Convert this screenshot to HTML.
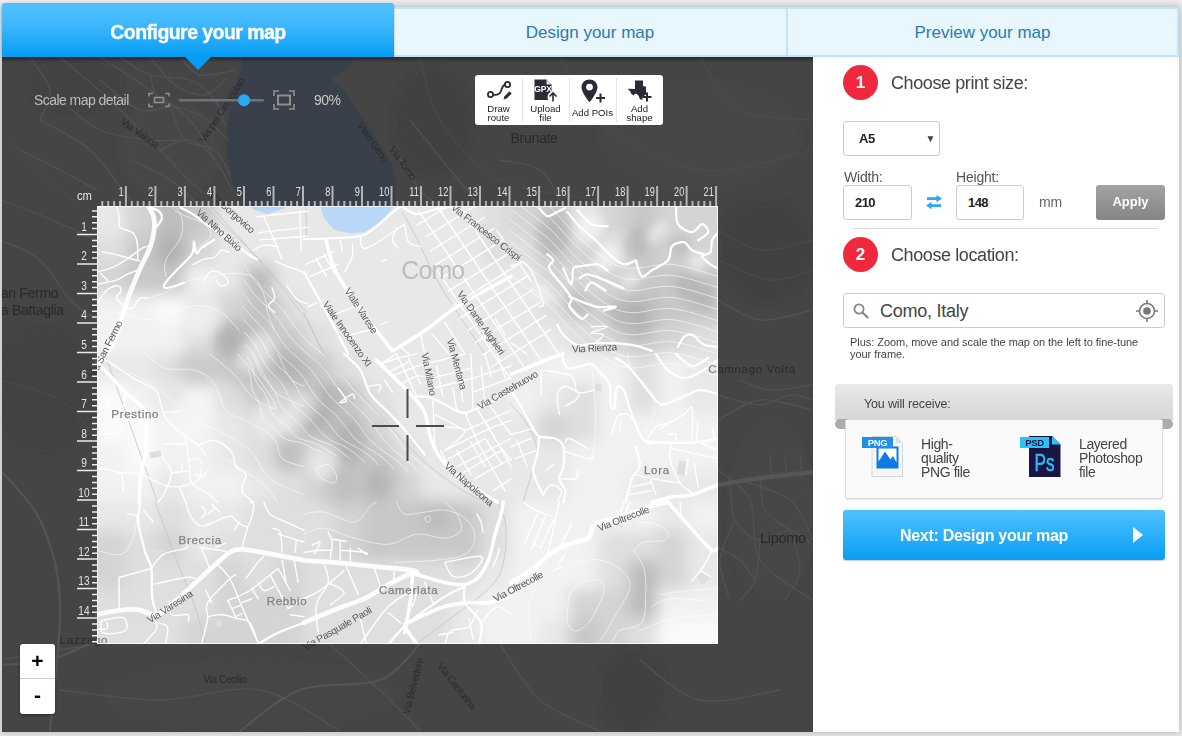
<!DOCTYPE html>
<html lang="en">
<head>
<meta charset="utf-8">
<title>Configure your map</title>
<style>
*{box-sizing:border-box;margin:0;padding:0}
html,body{width:1182px;height:736px;overflow:hidden}
body{background:#f1f1f1;font-family:"Liberation Sans",sans-serif;color:#444;position:relative}
.abs{position:absolute}
#app{position:absolute;left:2px;top:7px;width:1177px;height:724.500px;background:#fff;box-shadow:0 0 8px 2px rgba(0,0,0,.22)}
/* tabs */
#tab1{position:absolute;left:2px;top:3px;width:392px;height:54px;border-radius:3px 3px 0 0;background:linear-gradient(#50c1ff,#3eb7fc 40%,#069cf3);color:#fff;font-weight:bold;font-size:19.500px;text-align:center;line-height:58px;letter-spacing:-.55px;-webkit-text-stroke:.35px #fff;z-index:5;box-shadow:0 1px 2px rgba(0,0,0,.35)}
#tab1:after{content:"";position:absolute;left:183px;top:54px;border:13.5px solid transparent;border-top:13px solid #069cf3;border-bottom:0}
.tab{position:absolute;top:7px;height:50px;background:#e8f6fe;border:2px solid #bfe5fc;color:#2b7bb0;font-size:17px;text-align:center;line-height:47.500px;z-index:4}
#tab2{left:394px;width:394px;border-left:0}
#tab3{left:786px;width:393px}
/* map */
#map{position:absolute;left:2px;top:57px;width:811px;height:674.500px;background:#454545;overflow:hidden}
#mapsvg{position:absolute;left:-2px;top:-57px}
/* panel */
#panel{position:absolute;left:813px;top:57px;width:366px;height:674.500px;background:#fff}
.num{position:absolute;width:35px;height:35px;border-radius:50%;background:#f0283d;color:#fff;font-weight:bold;font-size:17px;text-align:center;line-height:35px}
.h{position:absolute;font-size:18px;color:#444;white-space:nowrap;letter-spacing:-.4px}
.inp{position:absolute;height:35px;border:1px solid #ccc;border-radius:3px;background:#fff;font-weight:bold;font-size:13px;color:#222;line-height:34.500px;padding-left:10px}
.lbl{position:absolute;font-size:14px;color:#555;letter-spacing:-.2px}
</style>
</head>
<body>
<div id="app"></div>
<div id="tab1">Configure your map</div>
<div id="tab2" class="tab">Design your map</div>
<div id="tab3" class="tab">Preview your map</div>

<div id="map">
<svg id="mapsvg" width="1182" height="736" viewBox="0 0 1182 736">
<defs><clipPath id="fc"><rect x="97" y="206" width="621" height="438"/></clipPath>
<filter id="bl" x="-20%" y="-20%" width="140%" height="140%"><feGaussianBlur stdDeviation="4"/></filter>
<filter id="blg" x="-5%" y="-5%" width="110%" height="110%"><feGaussianBlur stdDeviation="7.500"/></filter>
<path id="rdc" d="M175.2 206.0C176.4 208.4 181.4 214.9 182.3 220.2C183.2 225.5 182.9 232.1 180.5 238.0C178.1 243.9 170.7 251.0 168.1 255.7C165.4 260.5 164.8 262.8 164.5 266.4C164.2 270.0 166.0 275.3 166.3 277.1M148.5 298.4C151.8 297.2 161.3 294.2 168.1 291.3C174.9 288.3 182.3 283.0 189.4 280.6C196.5 278.2 203.6 278.2 210.7 277.1C217.8 275.9 224.9 273.5 232.0 273.5C239.1 273.5 248.0 273.5 253.3 277.1C258.7 280.6 261.6 288.9 264.0 294.8C266.4 300.7 265.8 306.7 267.5 312.6C269.3 318.5 273.5 327.4 274.7 330.4M97.0 319.7C100.6 318.5 109.4 312.6 118.3 312.6C127.2 312.6 141.4 319.7 150.3 319.7C159.2 319.7 163.9 315.0 171.6 312.6C179.3 310.2 188.2 305.5 196.5 305.5C204.8 305.5 214.2 308.4 221.4 312.6C228.5 316.7 236.2 327.4 239.1 330.4M171.6 206.0C172.8 207.2 173.4 210.1 178.7 213.1C184.0 216.1 198.3 219.9 203.6 223.8C208.9 227.6 211.9 232.1 210.7 236.2C209.5 240.3 198.9 246.6 196.5 248.6M511.0 175.8C514.4 178.5 524.4 186.5 531.1 191.9C537.8 197.3 543.5 200.6 551.2 208.0C559.0 215.4 568.0 227.5 577.4 236.2C586.8 244.9 598.5 255.0 607.6 260.3C616.6 265.7 621.0 267.7 631.7 268.4C642.5 269.0 657.6 263.0 672.0 264.4C686.4 265.7 710.4 274.4 718.0 276.4M511.0 186.9C514.4 189.6 524.4 197.6 531.1 203.0C537.8 208.3 543.5 211.7 551.2 219.1C559.0 226.5 568.0 238.5 577.4 247.2C586.8 256.0 598.5 266.0 607.6 271.4C616.6 276.8 621.0 278.8 631.7 279.4C642.5 280.1 657.6 274.1 672.0 275.4C686.4 276.8 710.4 285.5 718.0 287.5M511.0 198.0C514.4 200.6 524.4 208.7 531.1 214.0C537.8 219.4 543.5 222.8 551.2 230.1C559.0 237.5 568.0 249.6 577.4 258.3C586.8 267.0 598.5 277.1 607.6 282.5C616.6 287.8 621.0 289.8 631.7 290.5C642.5 291.2 657.6 285.1 672.0 286.5C686.4 287.8 710.4 296.5 718.0 298.6M511.0 209.0C514.4 211.7 524.4 219.7 531.1 225.1C537.8 230.5 543.5 233.8 551.2 241.2C559.0 248.6 568.0 260.7 577.4 269.4C586.8 278.1 598.5 288.2 607.6 293.5C616.6 298.9 621.0 300.9 631.7 301.6C642.5 302.2 657.6 296.2 672.0 297.5C686.4 298.9 710.4 307.6 718.0 309.6M511.0 220.1C514.4 222.8 524.4 230.8 531.1 236.2C537.8 241.5 543.5 244.9 551.2 252.3C559.0 259.7 568.0 271.7 577.4 280.4C586.8 289.2 598.5 299.2 607.6 304.6C616.6 310.0 621.0 312.0 631.7 312.6C642.5 313.3 657.6 307.3 672.0 308.6C686.4 310.0 710.4 318.7 718.0 320.7M511.0 231.2C514.4 233.8 524.4 241.9 531.1 247.2C537.8 252.6 543.5 256.0 551.2 263.3C559.0 270.7 568.0 282.8 577.4 291.5C586.8 300.2 598.5 310.3 607.6 315.7C616.6 321.0 621.0 323.0 631.7 323.7C642.5 324.4 657.6 318.3 672.0 319.7C686.4 321.0 710.4 329.7 718.0 331.8M511.0 242.2C514.4 244.9 524.4 252.9 531.1 258.3C537.8 263.7 543.5 267.0 551.2 274.4C559.0 281.8 568.0 293.9 577.4 302.6C586.8 311.3 598.5 321.4 607.6 326.7C616.6 332.1 621.0 334.1 631.7 334.8C642.5 335.4 657.6 329.4 672.0 330.7C686.4 332.1 710.4 340.8 718.0 342.8M511.0 253.3C514.4 256.0 524.4 264.0 531.1 269.4C537.8 274.7 543.5 278.1 551.2 285.5C559.0 292.9 568.0 304.9 577.4 313.6C586.8 322.4 598.5 332.4 607.6 337.8C616.6 343.2 621.0 345.2 631.7 345.8C642.5 346.5 657.6 340.5 672.0 341.8C686.4 343.2 710.4 351.9 718.0 353.9M511.0 264.4C514.4 267.0 524.4 275.1 531.1 280.4C537.8 285.8 543.5 289.2 551.2 296.5C559.0 303.9 568.0 316.0 577.4 324.7C586.8 333.4 598.5 343.5 607.6 348.9C616.6 354.2 621.0 356.2 631.7 356.9C642.5 357.6 657.6 351.5 672.0 352.9C686.4 354.2 710.4 362.9 718.0 365.0M511.0 275.4C514.4 278.1 524.4 286.1 531.1 291.5C537.8 296.9 543.5 300.2 551.2 307.6C559.0 315.0 568.0 327.1 577.4 335.8C586.8 344.5 598.5 354.6 607.6 359.9C616.6 365.3 621.0 367.3 631.7 368.0C642.5 368.6 657.6 362.6 672.0 363.9C686.4 365.3 710.4 374.0 718.0 376.0M145.3 354.0C148.6 356.3 157.4 365.4 165.4 368.1C173.5 370.8 185.5 367.7 193.6 370.1C201.6 372.4 208.3 375.5 213.7 382.2C219.1 388.9 219.7 403.6 225.8 410.3C231.8 417.0 241.9 417.7 249.9 422.4C258.0 427.1 268.7 432.5 274.1 438.5C279.4 444.5 277.1 453.9 282.1 458.6C287.1 463.3 300.4 465.3 304.0 466.7M209.7 354.0C213.7 357.4 226.4 366.7 233.8 374.1C241.2 381.5 247.2 392.6 253.9 398.3C260.6 404.0 270.7 407.7 274.1 408.3C277.4 409.0 276.7 407.3 274.1 402.3C271.4 397.3 264.0 386.2 258.0 378.1C251.9 370.1 241.2 358.0 237.8 354.0M253.9 354.0C256.0 358.0 262.0 371.4 266.0 378.1C270.0 384.9 271.7 389.5 278.1 394.2C284.4 398.9 299.7 404.3 304.0 406.3M103.0 358.0C112.1 363.1 142.9 378.5 157.4 388.2C171.8 397.9 179.5 409.3 189.6 416.4C199.6 423.4 207.7 424.8 217.7 430.5C227.8 436.2 241.2 442.5 249.9 450.6C258.6 458.6 261.0 471.4 270.0 478.7C279.1 486.1 298.4 492.2 304.0 494.8M278.1 354.0C280.1 358.0 285.8 372.8 290.2 378.1C294.5 383.5 301.7 384.9 304.0 386.2M217.7 454.6C221.1 456.6 230.5 462.0 237.8 466.7C245.2 471.4 255.3 476.9 262.0 482.8C268.7 488.7 275.4 498.9 278.1 502.1M316.1 468.7C318.1 468.0 324.8 463.7 328.1 464.7C331.5 465.7 335.2 471.7 336.2 474.7C337.2 477.7 336.5 482.1 334.2 482.8C331.8 483.4 325.1 481.1 322.1 478.7C319.1 476.4 317.1 470.4 316.1 468.7M627.7 354.0C628.4 356.7 627.7 363.7 631.7 370.1C635.7 376.5 648.2 384.9 651.8 392.2C655.5 399.6 655.2 407.3 653.9 414.4C652.5 421.4 645.5 431.1 643.8 434.5M591.5 364.1C592.2 372.4 595.5 398.6 595.5 414.4C595.5 430.1 594.5 447.9 591.5 458.6C588.5 469.4 579.7 475.4 577.4 478.7M97.0 550.3C101.0 551.0 115.1 556.3 121.1 554.3C127.2 552.3 130.5 544.9 133.2 538.2C135.9 531.5 136.6 518.1 137.2 514.1M304.0 514.1C307.4 513.7 315.7 510.7 324.1 512.1C332.5 513.4 346.6 523.1 354.3 522.1C362.0 521.1 366.7 509.4 370.4 506.0C374.1 502.7 375.4 502.7 376.4 502.0M304.0 534.2C307.4 533.2 315.7 527.5 324.1 528.2C332.5 528.8 343.6 535.5 354.3 538.2C365.0 540.9 378.1 544.9 388.5 544.3C398.9 543.6 407.3 535.2 416.7 534.2C426.1 533.2 437.5 538.9 444.8 538.2C452.2 537.5 458.9 534.2 460.9 530.2C463.0 526.1 459.6 518.8 456.9 514.1C454.2 509.4 446.9 504.0 444.8 502.0M396.6 502.0C397.9 504.0 399.9 512.4 404.6 514.1C409.3 515.7 418.0 512.7 424.7 512.1C431.4 511.4 438.1 509.0 444.8 510.0C451.6 511.1 459.9 513.7 465.0 518.1C470.0 522.5 475.0 530.2 475.0 536.2C475.0 542.2 471.7 550.3 465.0 554.3C458.3 558.3 446.5 559.0 434.8 560.4C423.0 561.7 401.3 562.0 394.5 562.4M424.7 518.1C425.4 517.8 427.7 515.7 428.7 516.1C429.8 516.4 431.1 519.1 430.8 520.1C430.4 521.1 427.7 522.5 426.7 522.1C425.7 521.8 425.1 518.8 424.7 518.1M559.3 574.4C562.3 572.4 570.4 564.7 577.4 562.4C584.4 560.0 593.8 558.7 601.5 560.4C609.3 562.0 619.0 567.7 623.7 572.4C628.4 577.1 631.1 581.5 629.7 588.5C628.4 595.6 620.3 606.3 615.6 614.7C610.9 623.1 604.9 633.9 601.5 638.8C598.2 643.7 596.5 643.2 595.5 644.1M569.4 594.6C571.4 592.5 576.4 584.8 581.4 582.5C586.5 580.1 595.8 578.8 599.5 580.5C603.2 582.1 604.9 586.2 603.6 592.5C602.2 598.9 595.8 612.3 591.5 618.7C587.1 625.1 581.4 630.1 577.4 630.8C573.4 631.4 568.7 628.8 567.3 622.7C566.0 616.7 569.0 599.3 569.4 594.6M633.7 550.3C635.4 548.9 638.8 543.9 643.8 542.2C648.8 540.6 659.9 541.9 663.9 540.2C667.9 538.6 669.3 534.9 667.9 532.2C666.6 529.5 661.2 525.8 655.9 524.1C650.5 522.5 639.1 522.5 635.7 522.1M633.7 550.3C635.4 553.3 641.8 561.4 643.8 568.4C645.8 575.4 646.1 583.5 645.8 592.5C645.5 601.6 646.1 616.4 641.8 622.7C637.4 629.1 624.7 627.2 619.7 630.8C614.6 634.3 612.9 641.8 611.6 644.1M531.1 644.1C530.8 637.1 527.4 613.5 529.1 602.6C530.8 591.7 539.2 582.5 541.2 578.5M659.9 594.6C664.6 593.9 678.4 591.5 688.1 590.5C697.8 589.5 713.0 588.9 718.0 588.5M651.8 606.6C655.2 605.3 660.9 599.3 672.0 598.6C683.0 597.9 710.4 601.9 718.0 602.6M639.8 630.8C645.1 628.8 658.9 621.4 672.0 618.7C685.0 616.0 710.4 615.3 718.0 614.7M420.0 57.0C423.3 67.5 426.7 99.5 440.0 120.0C453.3 140.5 473.3 166.7 500.0 180.0C526.7 193.3 583.3 196.7 600.0 200.0M560.0 57.0C566.7 67.5 576.7 101.2 600.0 120.0C623.3 138.8 664.5 165.0 700.0 170.0C735.5 175.0 794.2 153.3 813.0 150.0M700.0 57.0C706.7 65.8 721.2 99.5 740.0 110.0C758.8 120.5 800.8 118.3 813.0 120.0M718.0 230.0C725.0 233.3 744.2 248.3 760.0 250.0C775.8 251.7 804.2 241.7 813.0 240.0M718.0 260.0C726.7 263.3 754.2 278.3 770.0 280.0C785.8 281.7 805.8 271.7 813.0 270.0M0.0 130.0C8.3 138.3 36.7 167.3 50.0 180.0C63.3 192.7 75.0 201.7 80.0 206.0M0.0 380.0C10.0 383.3 43.8 390.0 60.0 400.0C76.2 410.0 90.8 433.3 97.0 440.0M244.5 265.6C246.4 268.5 251.6 277.5 255.9 282.8C260.2 288.0 265.5 292.4 270.3 297.3C275.0 302.1 280.0 306.8 284.4 312.0C288.7 317.2 292.1 323.3 296.4 328.6C300.7 333.9 305.1 339.0 310.1 343.7C315.0 348.4 321.1 352.1 326.1 356.8C331.1 361.4 335.7 366.4 340.1 371.6C344.4 376.8 347.8 382.9 352.2 388.1C356.6 393.4 361.5 398.1 366.3 402.9C371.2 407.6 376.7 411.8 381.3 416.8C385.8 421.9 389.5 427.7 393.6 433.1C397.7 438.6 401.2 444.6 405.8 449.7C410.3 454.7 415.8 458.9 420.9 463.5C426.0 468.0 433.6 474.8 436.2 477.1M243.8 279.6C245.6 282.2 250.7 290.3 254.8 295.1C258.9 299.8 264.0 303.6 268.3 308.2C272.6 312.8 276.6 317.6 280.4 322.6C284.3 327.6 287.2 333.4 291.3 338.2C295.3 343.0 300.0 347.2 304.7 351.5C309.4 355.7 314.8 359.2 319.3 363.7C323.7 368.2 327.3 373.4 331.1 378.4C335.0 383.3 338.2 388.9 342.3 393.6C346.5 398.3 351.5 402.2 356.1 406.6C360.6 411.0 365.4 415.1 369.5 419.8C373.6 424.6 376.6 430.3 380.5 435.3C384.4 440.2 388.2 445.2 392.8 449.5C397.4 453.9 403.1 457.2 407.9 461.3C412.8 465.3 419.6 471.9 421.9 474.0M243.4 293.4C245.1 295.6 250.2 302.7 254.0 307.0C257.9 311.3 262.5 314.8 266.3 319.2C270.0 323.6 273.1 328.6 276.5 333.3C279.8 338.0 282.7 343.2 286.5 347.5C290.3 351.8 295.1 355.3 299.4 359.2C303.6 363.1 308.3 366.6 312.0 371.0C315.8 375.4 318.5 380.7 322.0 385.3C325.4 390.0 328.7 394.8 332.6 399.0C336.6 403.1 341.6 406.4 345.7 410.4C349.9 414.4 353.8 418.6 357.5 423.1C361.1 427.5 363.8 432.9 367.6 437.2C371.4 441.5 375.8 445.4 380.3 449.0C384.9 452.7 390.4 455.4 395.0 459.1C399.5 462.7 405.5 469.0 407.6 470.9M243.3 306.8C245.0 308.8 250.1 314.8 253.6 318.7C257.1 322.6 261.0 326.1 264.2 330.3C267.3 334.5 269.5 339.6 272.5 343.9C275.5 348.3 278.4 352.7 282.0 356.6C285.5 360.4 290.2 363.3 293.9 367.0C297.7 370.7 301.2 374.5 304.4 378.7C307.5 382.9 309.6 388.1 312.7 392.3C315.8 396.6 319.3 400.5 323.1 404.2C326.8 407.8 331.5 410.7 335.2 414.4C338.9 418.1 342.0 422.4 345.3 426.4C348.7 430.5 351.3 435.1 355.1 438.8C358.9 442.4 363.7 445.2 368.1 448.2C372.6 451.2 377.7 453.7 381.9 457.0C386.0 460.3 391.3 466.1 393.1 468.0M243.7 319.8C245.3 321.6 250.2 326.6 253.3 330.2C256.3 333.8 259.3 337.5 261.9 341.5C264.4 345.6 266.1 350.5 268.7 354.5C271.3 358.5 274.4 362.0 277.6 365.5C280.9 368.9 285.0 371.5 288.2 375.0C291.3 378.6 293.7 382.7 296.3 386.8C298.9 390.8 300.7 395.5 303.6 399.3C306.4 403.0 310.2 406.1 313.6 409.3C317.1 412.5 321.2 415.2 324.5 418.6C327.7 422.0 330.1 426.2 333.2 429.7C336.3 433.3 339.3 437.0 343.1 439.9C346.9 442.8 351.9 444.7 356.1 447.2C360.4 449.7 364.8 452.1 368.5 455.1C372.3 458.0 377.0 463.3 378.7 465.0M244.5 332.5C245.9 334.0 250.5 338.4 252.9 341.8C255.4 345.2 257.4 349.1 259.4 352.9C261.4 356.8 262.7 361.3 265.0 364.8C267.3 368.4 270.5 371.2 273.3 374.3C276.1 377.4 279.5 380.1 282.0 383.5C284.4 387.0 285.9 391.3 288.0 395.1C290.1 398.8 291.9 402.9 294.6 406.1C297.3 409.3 301.1 411.5 304.3 414.3C307.4 417.1 310.7 419.8 313.6 422.9C316.4 426.0 318.3 429.9 321.3 432.9C324.3 435.8 327.7 438.5 331.5 440.7C335.3 442.9 340.2 444.1 344.1 446.2C348.0 448.4 351.6 450.8 355.0 453.4C358.3 456.0 362.8 460.5 364.4 461.9M245.6 344.8C246.8 346.2 250.6 350.2 252.5 353.5C254.3 356.8 255.3 360.8 256.8 364.4C258.3 368.0 259.5 371.9 261.5 375.1C263.6 378.2 266.6 380.4 268.9 383.3C271.2 386.2 273.5 389.0 275.3 392.4C277.1 395.7 277.8 400.0 279.6 403.4C281.4 406.8 283.4 409.9 285.9 412.6C288.4 415.3 292.1 417.0 294.8 419.4C297.6 421.9 300.1 424.6 302.6 427.3C305.0 430.0 306.8 433.4 309.8 435.7C312.7 438.0 316.5 439.5 320.2 441.1C323.9 442.8 328.4 443.6 331.9 445.4C335.4 447.2 338.1 449.7 341.2 452.0C344.2 454.2 348.7 457.6 350.2 458.7M246.9 357.0C247.7 358.4 250.5 362.3 251.7 365.4C252.9 368.6 253.1 372.7 254.2 376.0C255.3 379.3 256.5 382.4 258.2 385.2C259.9 387.9 262.5 389.8 264.2 392.5C265.9 395.3 267.1 398.4 268.3 401.6C269.5 404.8 269.8 408.8 271.3 411.7C272.9 414.5 275.1 416.7 277.5 418.9C279.8 421.0 283.0 422.4 285.3 424.6C287.7 426.7 289.4 429.4 291.6 431.7C293.8 434.0 295.7 436.5 298.6 438.1C301.6 439.7 305.6 440.3 309.1 441.5C312.6 442.6 316.4 443.4 319.4 444.9C322.4 446.4 324.5 448.9 327.3 450.6C330.0 452.3 334.6 454.6 336.1 455.4M248.2 369.2C248.6 370.6 250.1 374.6 250.7 377.6C251.2 380.7 250.9 384.6 251.6 387.5C252.3 390.4 253.6 392.8 254.9 395.2C256.1 397.7 258.1 399.5 259.1 402.1C260.1 404.8 260.3 408.2 261.0 411.1C261.7 414.0 262.0 417.3 263.3 419.7C264.7 422.0 267.2 423.3 269.2 425.0C271.3 426.7 273.8 428.0 275.7 429.8C277.6 431.7 278.7 434.2 280.8 436.0C282.8 437.7 285.0 439.2 287.9 440.2C290.8 441.2 294.8 441.1 297.9 441.8C301.0 442.6 304.0 443.5 306.5 444.7C309.1 446.0 310.7 448.1 313.3 449.3C315.9 450.5 320.6 451.6 322.1 452.0" fill="none" stroke-linecap="round" stroke-linejoin="round"/>
<path id="rdr" d="M203.6 206.0C212.5 214.6 239.7 238.6 256.9 257.5C274.1 276.5 298.6 309.3 307.0 319.7M210.7 206.0L307.0 312.6M402.6 212.0C404.9 216.4 410.3 225.8 416.7 238.2C423.0 250.6 429.4 267.2 440.8 286.5C452.2 305.8 477.7 342.8 485.1 354.1M306.0 206.0L306.4 238.2M105.0 354.0L157.4 502.1M324.1 354.0C331.8 362.4 355.0 387.5 370.4 404.3C385.8 421.1 402.3 440.9 416.7 454.6C431.1 468.4 445.5 478.9 456.9 486.8C468.3 494.7 480.4 499.5 485.1 502.1M511.0 404.3C513.7 407.7 522.7 416.7 527.1 424.4C531.5 432.1 536.5 442.2 537.2 450.6C537.8 459.0 533.5 466.1 531.1 474.7C528.8 483.3 524.4 497.5 523.1 502.1M155.4 502.0C159.0 512.1 171.1 545.6 177.5 562.4C183.9 579.1 188.9 589.0 193.6 602.6C198.3 616.2 203.6 637.1 205.7 644.1M416.7 644.1C421.4 640.5 434.8 630.3 444.8 622.7C454.9 615.1 468.3 606.0 477.0 598.6C485.8 591.2 492.5 586.2 497.2 578.5C501.9 570.7 503.9 561.7 505.2 552.3C506.5 542.9 506.5 530.5 505.2 522.1C503.9 513.7 498.5 505.4 497.2 502.0M307.0 320.0L324.0 354.0M304.0 313.0L322.0 350.0" fill="none" stroke-linecap="round" stroke-linejoin="round"/>
<path id="rds" d="M116.5 206.0C117.0 207.8 118.6 213.1 119.2 216.7C119.8 220.2 117.9 224.7 120.1 227.3C122.3 230.0 129.7 230.3 132.5 232.6C135.3 235.0 136.1 237.1 137.0 241.5C137.9 246.0 137.7 256.3 137.9 259.3M102.3 251.8C105.3 252.5 113.9 254.2 120.1 255.7C126.3 257.3 136.4 260.2 139.6 261.1M97.0 272.1C100.0 271.1 109.4 268.8 114.8 266.4C120.1 264.0 124.2 260.6 129.0 257.5C133.7 254.4 139.6 249.7 143.2 247.7C146.7 245.8 149.1 246.3 150.3 246.0M97.0 284.2C100.0 283.6 109.7 282.2 114.8 280.6C119.8 279.0 123.1 276.3 127.2 274.4C131.3 272.5 137.6 270.0 139.6 269.1M97.0 302.8C98.8 300.6 104.1 292.3 107.7 289.5C111.2 286.7 116.1 285.6 118.3 285.9C120.5 286.2 121.3 289.2 121.0 291.3C120.7 293.3 114.9 295.4 116.5 298.4C118.2 301.3 126.9 309.0 130.8 309.0C134.6 309.0 136.7 300.2 139.6 298.4C142.6 296.6 147.0 298.4 148.5 298.4M100.6 273.5L107.7 280.6M192.9 264.6C194.7 263.7 200.0 260.5 203.6 259.3C207.1 258.1 211.3 259.0 214.2 257.5C217.2 256.0 219.0 251.3 221.4 250.4C223.7 249.5 227.3 251.9 228.5 252.2M203.6 280.6C204.8 279.1 207.7 272.9 210.7 271.7C213.7 270.5 218.4 271.7 221.4 273.5C224.3 275.3 228.5 280.3 228.5 282.4C228.5 284.5 223.4 286.2 221.4 285.9C219.3 285.6 216.9 281.5 216.0 280.6M272.0 287.7C272.4 289.5 275.2 295.4 274.7 298.4C274.1 301.3 268.4 303.1 268.4 305.5C268.4 307.9 273.6 311.4 274.7 312.6M256.9 216.7L307.0 211.3M258.7 232.6L307.0 227.3M260.4 239.8L307.0 236.2M264.0 216.7C265.8 220.8 271.7 234.4 274.7 241.5C277.6 248.6 280.6 256.3 281.8 259.3M299.5 211.3L301.3 250.4M307.0 273.5C304.6 272.6 297.8 270.3 292.4 268.2C287.0 266.1 277.6 262.3 274.7 261.1M253.3 250.4C255.1 249.5 259.8 245.7 264.0 245.1C268.1 244.5 275.8 246.6 278.2 246.9M287.1 285.9C288.6 288.0 292.7 295.4 296.0 298.4C299.3 301.3 305.1 302.8 307.0 303.7M306.0 264.4L334.2 251.3M310.0 276.4L338.2 264.4M316.1 258.3L326.1 276.4M324.1 254.3L334.2 272.4M340.2 240.2L342.2 250.3M352.3 244.2C352.3 246.2 353.6 251.6 352.3 256.3C350.9 261.0 345.6 269.7 344.2 272.4M334.2 314.7L354.3 306.6M350.3 334.8L374.4 328.7M316.1 302.6L308.0 306.6M360.3 236.2C361.3 238.2 359.0 250.3 366.4 248.3C373.8 246.2 398.2 228.1 404.6 224.1M396.6 228.1C395.9 230.1 392.2 236.9 392.5 240.2C392.9 243.6 397.6 246.9 398.6 248.3M404.6 224.1C405.3 227.1 405.9 238.5 408.6 242.2C411.3 245.9 418.7 245.6 420.7 246.2M420.7 334.8L424.7 354.1M432.8 334.8L448.9 354.1M444.8 322.7L465.0 354.1M400.6 346.8L408.6 354.1M495.1 318.7L505.2 334.8M481.1 328.7L491.1 346.8M382.5 261.3L386.5 259.3M380.5 324.7L387.5 321.7M591.5 326.7C594.2 326.7 607.6 325.7 607.6 326.7C607.6 327.7 592.2 331.4 591.5 332.8C590.8 334.1 602.9 333.1 603.6 334.8C604.2 336.4 596.8 341.5 595.5 342.8M511.0 266.4C513.0 265.7 519.4 261.0 523.1 262.3C526.8 263.7 529.8 267.7 533.1 274.4C536.5 281.1 542.2 297.2 543.2 302.6C544.2 307.9 539.8 305.9 539.2 306.6M511.0 342.8L527.1 354.1M103.0 358.0C108.1 361.4 124.5 372.8 133.2 378.1C141.9 383.5 150.7 385.5 155.4 390.2C160.0 394.9 159.4 401.3 161.4 406.3C163.4 411.3 163.4 415.4 167.4 420.4C171.4 425.4 180.5 432.5 185.5 436.5C190.6 440.5 194.3 441.5 197.6 444.5C201.0 447.6 204.3 452.9 205.7 454.6M163.4 412.4L179.5 411.3M97.0 397.3C98.3 397.3 102.7 395.4 105.0 397.3C107.4 399.1 108.1 406.8 111.1 408.3C114.1 409.8 120.8 408.7 123.2 406.3C125.5 404.0 124.8 396.3 125.2 394.2M97.0 434.5C100.4 434.1 112.4 434.8 117.1 432.5C121.8 430.1 120.8 422.1 125.2 420.4C129.5 418.7 140.3 422.1 143.3 422.4M163.4 443.5L185.5 444.5M185.5 436.5C186.2 441.5 188.5 459.0 189.6 466.7C190.6 474.4 188.2 478.1 191.6 482.8C194.9 487.5 205.3 491.6 209.7 494.8C214.0 498.1 216.4 500.9 217.7 502.1M199.6 444.5C202.3 443.9 210.3 439.2 215.7 440.5C221.1 441.9 228.5 448.2 231.8 452.6C235.2 457.0 233.5 463.0 235.8 466.7C238.2 470.4 244.9 470.7 245.9 474.7C246.9 478.7 240.5 486.3 241.9 490.8C243.2 495.4 251.9 500.2 253.9 502.1M97.0 468.7C99.0 468.9 105.0 468.7 109.1 469.7C113.1 470.7 118.8 471.2 121.1 474.7C123.5 478.2 122.8 488.1 123.2 490.8M121.1 472.7C124.5 473.0 134.2 472.7 141.3 474.7C148.3 476.7 157.0 482.8 163.4 484.8C169.8 486.8 174.8 487.1 179.5 486.8C184.2 486.5 189.6 483.4 191.6 482.8M161.4 456.6C163.1 459.3 171.1 466.3 171.4 472.7C171.8 479.1 165.7 489.9 163.4 494.8C161.1 499.7 158.4 500.9 157.4 502.1M171.4 472.7L189.6 470.7M181.5 462.7L182.5 470.7M189.6 460.6C190.9 460.3 195.6 458.3 197.6 458.6C199.6 459.0 201.0 462.0 201.6 462.7M195.6 474.7C196.6 475.1 199.6 477.4 201.6 476.7C203.6 476.1 206.7 471.7 207.7 470.7M201.6 468.7C201.3 470.4 201.0 476.4 199.6 478.7C198.3 481.1 194.6 482.1 193.6 482.8M179.5 486.8L185.5 502.1M432.8 398.3L434.8 448.6M432.8 378.1L471.0 368.1M432.8 388.2L473.0 378.1M416.7 366.1L465.0 354.0M434.8 414.4L465.0 430.5M434.8 426.4C439.8 427.1 463.3 426.4 465.0 430.5C466.6 434.5 448.2 447.2 444.8 450.6M465.0 430.5L511.0 410.3M471.0 354.0L473.0 408.3M452.9 388.2L456.9 410.3M481.1 366.1L485.1 404.3M444.8 450.6C451.6 447.2 474.1 435.5 485.1 430.5C496.1 425.4 506.7 422.1 511.0 420.4M456.9 466.7L511.0 438.5M475.0 478.7L511.0 458.6M493.1 490.8L511.0 478.7M465.0 412.4C467.3 417.7 472.3 431.5 479.1 444.5C485.8 457.6 500.8 483.1 505.2 490.8M485.1 420.4L511.0 466.7M477.0 408.3L497.2 442.5M440.8 450.6L450.9 470.7M368.4 386.2C370.4 386.0 378.8 384.2 380.5 385.2C382.1 386.2 378.8 391.1 378.4 392.2M384.5 380.2L392.5 392.2M338.2 388.2C339.5 390.2 345.9 397.9 346.3 400.3C346.6 402.6 339.2 403.3 340.2 402.3C341.2 401.3 349.9 394.9 352.3 394.2C354.6 393.6 354.0 397.6 354.3 398.3M392.5 376.1L416.7 366.1M396.6 354.0L416.7 396.3M380.5 364.1L396.6 354.0M497.2 354.0L505.2 378.1M543.2 370.1C547.9 371.1 565.7 372.4 571.4 376.1C577.1 379.8 573.7 389.9 577.4 392.2C581.1 394.6 590.8 390.6 593.5 390.2M565.3 406.3C567.0 405.3 573.0 402.3 575.4 400.3C577.7 398.3 578.7 395.2 579.4 394.2M559.3 414.4C559.0 411.0 556.3 398.9 557.3 394.2C558.3 389.5 562.0 386.5 565.3 386.2C568.7 385.9 575.4 391.2 577.4 392.2M611.6 434.5C612.6 431.5 615.0 419.7 617.6 416.4C620.3 413.0 625.4 413.7 627.7 414.4C630.0 415.0 631.1 419.4 631.7 420.4M619.7 430.5L621.7 420.4M647.8 438.5C649.2 436.5 651.8 429.1 655.9 426.4C659.9 423.8 669.3 423.1 672.0 422.4M659.9 428.4C663.9 426.1 678.7 417.7 684.0 414.4C689.4 411.0 690.7 403.6 692.1 408.3C693.4 413.0 692.1 436.8 692.1 442.5M667.9 434.5C669.3 434.5 674.6 433.1 676.0 434.5C677.3 435.8 676.0 441.2 676.0 442.5M698.1 422.4L696.1 442.5M712.2 428.4L714.2 438.5M672.0 442.5C671.6 445.2 668.6 451.9 670.0 458.6C671.3 465.3 676.3 477.1 680.0 482.8C683.7 488.5 690.1 491.2 692.1 492.8M635.7 474.7C638.4 475.4 644.5 477.4 651.8 478.7C659.2 480.1 675.3 482.1 680.0 482.8M647.8 472.7L655.9 494.8M631.7 486.8L651.8 482.8M627.7 494.8L651.8 490.8M688.1 458.6L686.1 474.7M694.1 462.7L698.1 486.8M672.0 448.6L718.0 458.6M700.1 442.5L718.0 450.6M511.0 434.5L533.1 428.4M511.0 446.6L531.1 438.5M515.0 458.6L535.1 450.6M517.0 440.5L527.1 466.7M563.3 450.6C567.3 451.9 582.4 457.6 587.5 458.6C592.5 459.6 592.5 457.0 593.5 456.6M565.3 442.5C566.0 441.9 565.7 437.5 569.4 438.5C573.0 439.5 584.4 446.9 587.5 448.6M561.3 478.7C563.6 478.7 572.7 480.1 575.4 478.7C578.1 477.4 577.1 472.0 577.4 470.7M543.2 494.8C544.5 493.2 548.2 485.5 551.2 484.8C554.3 484.1 560.3 487.9 561.3 490.8C562.3 493.7 557.9 500.2 557.3 502.1M545.2 470.7L553.3 464.7M541.2 370.1L541.2 394.2M119.1 577.5L151.3 568.4M119.1 577.5L119.1 608.6M152.3 584.5C157.9 583.3 178.3 578.5 185.5 577.5C192.7 576.4 193.9 578.3 195.6 578.5M151.3 568.4C153.3 566.1 157.7 557.7 163.4 554.3C169.1 551.0 181.5 550.0 185.5 548.3C189.6 546.6 187.2 544.9 187.5 544.3M127.2 514.1C128.5 514.2 133.2 514.1 135.2 515.1C137.2 516.1 138.6 519.3 139.3 520.1M143.3 510.0L153.3 522.1M185.5 502.0C186.5 504.7 188.9 514.1 191.6 518.1C194.3 522.1 197.9 525.5 201.6 526.1C205.3 526.8 209.0 523.8 213.7 522.1C218.4 520.4 225.8 516.1 229.8 516.1C233.8 516.1 234.8 520.4 237.8 522.1C240.9 523.8 245.2 528.8 247.9 526.1C250.6 523.5 253.6 510.0 253.9 506.0C254.3 502.0 250.6 502.7 249.9 502.0M247.9 526.1L241.9 548.3M201.6 506.0C202.3 507.0 205.7 510.0 205.7 512.1C205.7 514.1 202.3 517.1 201.6 518.1M211.7 504.0L219.7 512.1M215.7 508.0L207.7 514.1M233.8 530.2L239.9 522.1M199.6 547.3L225.8 551.3M201.6 548.3L209.7 568.4M215.7 547.3L225.8 543.2M217.7 564.4C219.7 566.7 225.8 571.4 229.8 578.5C233.8 585.5 237.2 595.9 241.9 606.6C246.6 617.4 255.3 636.8 258.0 642.8M229.8 578.5C226.1 582.5 211.4 595.9 207.7 602.6C204.0 609.3 208.7 611.8 207.7 618.7C206.7 625.6 202.6 639.8 201.6 644.1M205.7 590.5L211.7 602.6M229.8 578.5L235.8 574.4M207.7 616.7C210.0 616.4 216.7 614.3 221.7 614.7C226.8 615.0 233.2 617.4 237.8 618.7C242.5 620.0 246.6 618.7 249.9 622.7C253.3 626.7 256.6 639.5 258.0 642.8M227.8 600.6C231.5 598.9 241.5 595.9 249.9 590.5C258.3 585.2 273.4 572.1 278.1 568.4M227.8 600.6L235.8 616.7M231.8 608.6L239.9 605.6M235.8 616.7L241.9 613.7M241.9 602.6L251.9 598.6M251.9 588.5L258.0 598.6M258.0 582.5C259.0 583.8 261.3 589.9 264.0 590.5C266.7 591.2 272.4 587.2 274.1 586.5M270.0 574.4L288.1 608.6M278.1 568.4L290.2 590.5M245.9 578.5C247.9 575.8 254.9 566.1 258.0 562.4C261.0 558.7 263.0 557.3 264.0 556.3M264.0 502.0C265.0 504.0 266.3 510.7 270.0 514.1C273.7 517.4 280.5 519.4 286.1 522.1C291.8 524.8 301.1 528.8 304.0 530.2M272.1 528.2C273.4 528.8 278.4 528.2 280.1 532.2C281.8 536.2 281.8 548.9 282.1 552.3M278.1 534.2L304.0 542.2M296.2 540.2L295.2 552.3M294.2 560.4L298.2 582.5M282.1 560.4L286.1 582.5M101.0 620.7C104.7 620.2 119.1 616.0 123.2 617.7C127.2 619.4 128.5 628.3 125.2 630.8C121.8 633.3 107.1 634.5 103.0 632.8C99.0 631.1 101.4 622.7 101.0 620.7M97.0 628.8C98.7 628.8 105.4 629.8 107.1 628.8C108.7 627.8 107.1 623.7 107.1 622.7M155.4 622.7C157.4 623.4 165.7 623.2 167.4 626.7C169.1 630.3 165.7 641.2 165.4 644.1M169.4 600.6C169.8 602.9 168.4 612.3 171.4 614.7C174.5 617.0 184.7 613.7 187.5 614.7C190.4 615.7 188.4 619.7 188.5 620.7M143.3 644.1C145.3 641.8 153.0 634.3 155.4 630.8C157.7 627.2 157.0 624.1 157.4 622.7M288.1 608.6L304.0 598.6M290.2 614.7L304.0 616.7M444.8 562.4C446.5 562.0 449.2 561.4 454.9 560.4C460.6 559.3 474.7 556.0 479.1 556.3C483.4 556.7 482.7 559.3 481.1 562.4C479.4 565.4 473.7 572.1 469.0 574.4C464.3 576.8 456.9 578.5 452.9 576.4C448.9 574.4 446.2 564.7 444.8 562.4M477.0 514.1C477.7 515.4 480.1 519.1 481.1 522.1C482.1 525.1 482.7 530.5 483.1 532.2M493.1 566.4C493.8 564.7 496.2 559.3 497.2 556.3C498.2 553.3 498.8 549.6 499.2 548.3M328.1 532.2C328.8 533.9 331.8 537.9 332.2 542.2C332.5 546.6 330.5 555.7 330.2 558.3M332.2 539.2L346.3 541.2M340.2 542.2L340.2 560.4M350.3 548.3L350.3 560.4M340.2 550.3C344.2 550.6 360.0 551.6 364.4 552.3C368.7 553.0 367.4 555.0 366.4 554.3C365.4 553.6 359.7 549.3 358.3 548.3M312.0 545.3C313.4 544.8 319.8 540.7 320.1 542.2C320.4 543.8 315.1 552.3 314.1 554.3M304.0 552.3C306.7 552.0 315.7 550.6 320.1 550.3C324.5 550.0 328.5 550.3 330.2 550.3M324.1 564.4C324.8 567.4 329.5 575.4 328.1 582.5C326.8 589.5 317.4 596.4 316.1 606.6C314.7 616.9 319.4 637.8 320.1 644.1M346.3 566.4L358.3 594.6M328.1 582.5C330.8 584.2 343.9 588.9 344.2 592.5C344.6 596.2 332.5 602.6 330.2 604.6M304.0 598.6C306.7 597.2 313.4 595.2 320.1 590.5C326.8 585.8 340.2 573.8 344.2 570.4M374.4 568.4L380.5 586.5M394.5 570.4L393.5 578.5M360.3 644.1C364.4 638.5 378.1 618.2 384.5 610.7C390.9 603.1 393.9 601.9 398.6 598.6C403.3 595.2 410.3 591.9 412.7 590.5M388.5 612.7L400.6 622.7M360.3 618.7L366.4 644.1M424.7 582.5L432.8 602.6M416.7 592.5L412.7 606.6M444.8 644.1C445.9 641.8 446.9 633.7 450.9 630.8C454.9 627.9 464.6 630.1 469.0 626.7C473.3 623.4 475.7 613.3 477.0 610.7M469.0 618.7L473.0 638.8M438.8 634.8L452.9 632.8M481.1 622.7C483.7 620.0 492.2 608.0 497.2 606.6C502.2 605.3 508.7 613.3 511.0 614.7M712.2 550.3C710.5 553.3 705.5 563.4 702.1 568.4C698.8 573.4 693.8 578.5 692.1 580.5M700.1 570.4L710.2 576.4M680.0 502.0L682.0 520.1M523.1 502.0C525.1 503.3 530.5 507.7 535.1 510.0C539.8 512.4 548.6 515.1 551.2 516.1M537.2 514.1L525.1 542.2M545.2 516.1L531.1 550.3M553.3 520.1L541.2 546.3M559.3 502.0C558.6 505.0 557.3 511.1 555.3 520.1C553.3 529.2 548.6 550.3 547.2 556.3M571.4 524.1L559.3 548.3M535.1 544.3L541.2 548.3M559.3 562.4L565.3 554.3M553.3 570.4L563.3 566.4M615.6 510.0C616.3 510.7 618.3 515.4 619.7 514.1C621.0 512.7 623.0 504.0 623.7 502.0M625.7 512.1L629.7 502.0M60.0 57.0C68.3 64.2 93.3 84.5 110.0 100.0C126.7 115.5 145.0 135.0 160.0 150.0C175.0 165.0 187.5 180.7 200.0 190.0C212.5 199.3 229.2 203.3 235.0 206.0M100.0 57.0C108.3 62.5 135.0 79.5 150.0 90.0C165.0 100.5 179.2 108.3 190.0 120.0C200.8 131.7 210.8 153.3 215.0 160.0M150.0 57.0C154.2 61.7 165.8 78.7 175.0 85.0C184.2 91.3 196.7 95.8 205.0 95.0C213.3 94.2 221.7 82.5 225.0 80.0M40.0 120.0C48.3 125.0 75.0 136.7 90.0 150.0C105.0 163.3 123.3 191.7 130.0 200.0M0.0 240.0C6.7 243.3 28.3 250.0 40.0 260.0C51.7 270.0 60.5 290.0 70.0 300.0C79.5 310.0 92.5 316.7 97.0 320.0M180.0 57.0C183.3 60.0 190.8 72.8 200.0 75.0C209.2 77.2 229.2 70.8 235.0 70.0M160.0 150.0C165.0 148.3 180.8 138.3 190.0 140.0C199.2 141.7 208.0 151.7 215.0 160.0C222.0 168.3 229.2 185.0 232.0 190.0M718.0 300.0C725.0 303.3 744.2 318.3 760.0 320.0C775.8 321.7 804.2 311.7 813.0 310.0M718.0 420.0C725.0 416.7 744.2 401.7 760.0 400.0C775.8 398.3 804.2 408.3 813.0 410.0M740.0 480.0C748.3 483.3 777.8 490.0 790.0 500.0C802.2 510.0 809.2 533.3 813.0 540.0M718.0 470.0C723.3 475.0 743.0 485.0 750.0 500.0C757.0 515.0 749.5 543.3 760.0 560.0C770.5 576.7 804.2 593.3 813.0 600.0M0.0 660.0C10.0 658.3 43.8 652.7 60.0 650.0C76.2 647.3 90.8 645.0 97.0 644.0M60.0 690.0C76.7 691.7 126.7 700.0 160.0 700.0C193.3 700.0 230.0 684.8 260.0 690.0C290.0 695.2 326.7 724.2 340.0 731.0M330.0 644.0C340.0 653.3 375.0 685.5 390.0 700.0C405.0 714.5 415.0 725.8 420.0 731.0M500.0 644.0C506.7 653.3 523.3 685.5 540.0 700.0C556.7 714.5 590.0 725.8 600.0 731.0M640.0 660.0C650.0 666.7 676.7 695.0 700.0 700.0C723.3 705.0 766.7 691.7 780.0 690.0M395.0 150.0C399.2 156.7 412.5 180.7 420.0 190.0C427.5 199.3 436.7 203.3 440.0 206.0M410.0 120.0C416.7 128.3 438.3 155.7 450.0 170.0C461.7 184.3 475.0 200.0 480.0 206.0M500.0 160.0C506.7 161.7 530.0 163.3 540.0 170.0C550.0 176.7 556.7 195.0 560.0 200.0M380.5 364.1C383.5 363.1 392.5 359.7 398.6 358.0C404.6 356.3 413.7 354.7 416.7 354.0M388.5 372.1L408.6 362.0M400.6 384.2C403.3 382.8 411.3 377.1 416.7 376.1C422.0 375.1 430.1 377.8 432.8 378.1M408.6 358.0L420.7 384.2M436.8 366.1L442.8 396.3M456.9 360.0L463.0 402.3M485.1 354.0L491.1 376.1M473.0 378.1L511.0 366.1M473.0 392.2L511.0 378.1M489.1 404.3L511.0 434.5M456.9 450.6L471.0 474.7M471.0 442.5L485.1 466.7M485.1 438.5L501.2 462.7M497.2 442.5L511.0 460.6M448.9 458.6L485.1 438.5M463.0 472.7L501.2 450.6M730.0 478.0C730.8 485.0 730.0 509.7 735.0 520.0C740.0 530.3 750.8 538.3 760.0 540.0C769.2 541.7 781.2 529.2 790.0 530.0C798.8 530.8 809.2 542.5 813.0 545.0M760.0 478.0C760.8 483.3 760.0 501.3 765.0 510.0C770.0 518.7 785.8 526.7 790.0 530.0M735.0 520.0C732.5 526.7 720.8 546.7 720.0 560.0C719.2 573.3 728.3 593.3 730.0 600.0M760.0 540.0C759.2 546.7 758.3 570.0 755.0 580.0C751.7 590.0 742.5 596.7 740.0 600.0M790.0 530.0C791.7 536.7 800.8 558.3 800.0 570.0C799.2 581.7 787.5 595.0 785.0 600.0M770.0 455.0L772.0 478.0M785.0 455.0L787.0 478.0M800.0 455.0L802.0 478.0M718.0 548.0C721.7 550.0 733.8 554.7 740.0 560.0C746.2 565.3 752.5 576.7 755.0 580.0M718.0 395.0C725.0 396.7 748.0 405.0 760.0 405.0C772.0 405.0 781.2 395.8 790.0 395.0C798.8 394.2 809.2 399.2 813.0 400.0M740.0 380.0C745.0 381.7 757.8 389.2 770.0 390.0C782.2 390.8 805.8 385.8 813.0 385.0M120.0 57.0C125.0 60.0 138.3 71.2 150.0 75.0C161.7 78.8 179.2 75.8 190.0 80.0C200.8 84.2 209.2 92.5 215.0 100.0C220.8 107.5 223.3 120.8 225.0 125.0M150.0 75.0C151.7 79.2 151.7 93.3 160.0 100.0C168.3 106.7 188.7 108.3 200.0 115.0C211.3 121.7 223.3 135.8 228.0 140.0M100.0 80.0C106.7 85.0 128.3 105.8 140.0 110.0C151.7 114.2 165.0 105.8 170.0 105.0M170.0 105.0C172.5 110.8 177.5 132.5 185.0 140.0C192.5 147.5 207.5 144.2 215.0 150.0C222.5 155.8 227.5 170.8 230.0 175.0M60.0 100.0C66.7 105.0 85.0 123.3 100.0 130.0C115.0 136.7 135.8 138.3 150.0 140.0C164.2 141.7 179.2 140.0 185.0 140.0M130.0 160.0C136.7 163.3 158.3 172.3 170.0 180.0C181.7 187.7 195.0 201.7 200.0 206.0M20.0 150.0C26.7 153.3 47.2 163.3 60.0 170.0C72.8 176.7 90.8 186.7 97.0 190.0M0.0 200.0C6.7 202.5 23.8 208.3 40.0 215.0C56.2 221.7 87.5 235.8 97.0 240.0M30.0 57.0C33.3 62.5 48.3 79.5 50.0 90.0C51.7 100.5 41.7 115.0 40.0 120.0M417.9 224.7L446.2 207.0M425.6 237.0L473.6 206.9M430.4 251.0L484.1 217.5M435.3 265.1L494.7 228.0M443.0 277.4L502.3 240.3M447.8 291.4L512.9 250.8M452.7 305.5L520.5 263.1M460.4 317.8L528.2 275.4M468.1 330.1L533.1 289.5M475.7 342.4L540.8 301.8M483.4 354.7L545.6 315.8M491.1 367.0L550.5 329.9M497.1 230.6L530.7 280.4M459.8 207.5L558.6 354.0M437.4 206.5L541.8 361.3M418.8 211.1L526.9 371.3M437.4 270.9L510.1 378.7" fill="none" stroke-linecap="round" stroke-linejoin="round"/>
<path id="rdm" d="M150.3 207.8C151.8 208.4 157.3 209.6 159.2 211.3C161.1 213.1 162.1 216.1 161.8 218.4C161.5 220.8 158.7 223.9 157.4 225.5C156.1 227.2 154.7 227.8 154.2 228.2M214.2 239.8C212.2 241.1 204.8 245.5 201.8 247.7C198.9 250.0 197.8 254.1 196.5 253.1C195.2 252.0 194.6 241.4 193.8 241.5C193.1 241.7 195.2 248.9 192.0 254.0C188.9 259.0 179.8 266.7 175.2 271.7C170.6 276.8 165.8 281.4 164.5 284.2C163.2 286.9 163.9 288.3 167.2 288.1C170.4 287.8 181.2 283.6 184.0 282.7M180.5 207.8C182.3 208.7 186.1 209.8 191.2 213.1C196.2 216.4 203.9 222.6 210.7 227.3C217.5 232.1 225.8 237.1 232.0 241.5C238.2 246.0 243.9 251.0 248.0 254.0C252.1 256.9 255.4 258.4 256.9 259.3M304.0 239.2C308.7 239.0 322.8 238.7 332.2 238.2C341.6 237.7 353.3 237.9 360.3 236.2C367.4 234.5 369.4 231.8 374.4 228.1C379.5 224.4 386.2 217.7 390.5 214.0C394.9 210.4 398.9 207.3 400.6 206.0M400.6 206.0C403.3 207.3 411.3 213.4 416.7 214.0C422.0 214.7 426.7 211.4 432.8 210.0C438.8 208.7 449.5 206.7 452.9 206.0M304.0 272.4C305.3 274.7 309.0 281.1 312.0 286.5C315.1 291.8 318.1 297.2 322.1 304.6C326.1 312.0 331.8 322.5 336.2 330.7C340.6 339.0 346.3 350.2 348.3 354.1M539.2 208.0C540.5 209.4 544.2 215.4 547.2 216.1C550.2 216.7 554.3 213.4 557.3 212.0C560.3 210.7 564.0 208.7 565.3 208.0M567.3 212.0C569.4 214.4 574.7 221.4 579.4 226.1C584.1 230.8 590.1 235.2 595.5 240.2C600.9 245.2 606.9 252.3 611.6 256.3C616.3 260.3 619.7 263.7 623.7 264.4C627.7 265.0 633.7 261.0 635.7 260.3M577.4 210.0C579.7 212.4 586.5 221.4 591.5 224.1C596.5 226.8 604.9 225.8 607.6 226.1M635.7 260.3C636.8 263.0 639.1 274.7 641.8 276.4C644.5 278.1 647.5 273.1 651.8 270.4C656.2 267.7 664.6 264.4 667.9 260.3C671.3 256.3 669.3 249.3 672.0 246.2C674.6 243.2 680.7 241.5 684.0 242.2C687.4 242.9 688.7 248.3 692.1 250.3C695.4 252.3 702.1 253.6 704.2 254.3M676.0 206.0C676.3 209.0 675.3 219.7 678.0 224.1C680.7 228.5 688.1 232.2 692.1 232.2C696.1 232.2 699.5 224.1 702.1 224.1C704.8 224.1 708.9 229.5 708.2 232.2C707.5 234.8 699.8 238.9 698.1 240.2M547.2 254.3C548.2 255.3 552.9 258.0 553.3 260.3C553.6 262.7 547.6 264.0 549.2 268.4C550.9 272.7 559.6 281.5 563.3 286.5C567.0 291.5 570.4 295.2 571.4 298.6C572.4 301.9 567.7 303.3 569.4 306.6C571.0 310.0 578.4 317.3 581.4 318.7C584.4 320.0 586.5 315.3 587.5 314.7M563.3 268.4C564.7 271.1 569.7 284.5 571.4 284.5C573.0 284.5 572.0 271.4 573.4 268.4C574.7 265.4 575.4 267.0 579.4 266.4C583.4 265.7 592.8 263.7 597.5 264.4C602.2 265.0 605.9 269.4 607.6 270.4M579.4 278.4C580.8 277.8 583.1 274.1 587.5 274.4C591.8 274.7 599.5 278.1 605.6 280.4C611.6 282.8 620.7 287.2 623.7 288.5M585.4 290.5C586.5 289.2 588.1 282.5 591.5 282.5C594.8 282.5 603.2 289.2 605.6 290.5M569.4 296.5C573.7 298.2 587.8 304.9 595.5 306.6C603.2 308.3 614.3 305.9 615.6 306.6C617.0 307.3 605.6 310.0 603.6 310.6M557.3 324.7C558.3 326.4 560.0 331.4 563.3 334.8C566.7 338.1 571.0 343.5 577.4 344.8C583.8 346.2 592.5 342.8 601.5 342.8C610.6 342.8 623.3 343.5 631.7 344.8C640.1 346.2 648.5 349.9 651.8 350.9M718.0 232.2C717.1 233.5 713.5 236.9 712.2 240.2C710.9 243.6 711.9 249.6 710.2 252.3C708.5 255.0 702.1 254.3 702.1 256.3C702.1 258.3 707.5 262.3 710.2 264.4C712.8 266.4 716.7 267.7 718.0 268.4M678.0 346.8C679.0 345.2 681.7 338.8 684.0 336.8C686.4 334.8 688.7 333.4 692.1 334.8C695.4 336.1 699.8 342.8 704.2 344.8C708.5 346.8 715.7 346.5 718.0 346.8M344.2 354.0C346.9 356.7 356.0 363.4 360.3 370.1C364.7 376.8 365.7 387.2 370.4 394.2C375.1 401.3 382.1 405.6 388.5 412.4C394.9 419.1 402.6 427.4 408.6 434.5C414.7 441.5 422.0 451.3 424.7 454.6M416.7 396.3C419.4 396.6 425.4 395.6 432.8 398.3C440.2 400.9 453.6 410.7 460.9 412.4C468.3 414.0 468.7 411.7 477.0 408.3C485.4 405.0 505.4 394.9 511.0 392.2M511.0 390.2C513.0 393.6 519.4 404.0 523.1 410.3C526.8 416.7 530.5 424.1 533.1 428.4C535.8 432.8 535.5 434.8 539.2 436.5C542.9 438.2 551.2 436.8 555.3 438.5C559.3 440.2 562.0 441.9 563.3 446.6C564.7 451.3 564.0 461.3 563.3 466.7C562.6 472.0 559.0 474.7 559.3 478.7C559.6 482.8 564.7 486.9 565.3 490.8C566.0 494.7 563.6 500.2 563.3 502.1M539.2 436.5C538.8 439.5 538.2 448.9 537.2 454.6C536.2 460.3 533.1 466.0 533.1 470.7C533.1 475.4 535.5 478.7 537.2 482.8C538.8 486.8 542.2 492.8 543.2 494.8M561.3 354.0C562.3 356.3 564.0 366.1 567.3 368.1C570.7 370.1 577.4 366.7 581.4 366.1C585.4 365.4 588.5 363.1 591.5 364.1C594.5 365.1 596.5 368.8 599.5 372.1C602.5 375.5 607.7 378.6 609.6 384.2C611.4 389.7 609.8 401.5 610.6 405.3C611.4 409.2 613.6 410.2 614.6 407.3C615.6 404.5 615.1 391.1 616.6 388.2C618.1 385.4 621.2 385.9 623.7 390.2C626.2 394.6 628.4 406.0 631.7 414.4C635.1 422.7 639.8 435.8 643.8 440.5C647.8 445.2 653.9 442.2 655.9 442.5M615.6 358.0C617.6 359.4 623.7 362.4 627.7 366.1C631.7 369.8 635.1 374.5 639.8 380.2C644.5 385.9 651.8 396.3 655.9 400.3C659.9 404.3 659.2 405.0 663.9 404.3C668.6 403.6 678.0 398.6 684.0 396.3C690.1 393.9 694.5 390.6 700.1 390.2C705.8 389.9 715.1 393.6 718.0 394.2M643.8 440.5C647.2 440.9 655.9 442.2 663.9 442.5C672.0 442.9 683.1 443.2 692.1 442.5C701.1 441.9 713.7 439.2 718.0 438.5M635.7 446.6C636.4 449.9 640.4 461.3 639.8 466.7C639.1 472.0 634.1 472.8 631.7 478.7C629.4 484.7 626.7 498.2 625.7 502.1M655.9 354.0C657.9 356.7 663.2 366.1 667.9 370.1C672.6 374.1 678.7 377.8 684.0 378.1C689.4 378.5 694.5 375.1 700.1 372.1C705.8 369.1 715.1 362.0 718.0 360.0M676.0 354.0C678.7 356.0 686.7 365.4 692.1 366.1C697.5 366.7 705.5 359.4 708.2 358.0M140.3 502.0C139.9 505.4 137.4 513.7 138.2 522.1C139.1 530.5 143.1 544.6 145.3 552.3C147.5 560.0 150.2 560.7 151.3 568.4C152.5 576.1 151.3 590.9 152.3 598.6C153.3 606.3 156.5 612.0 157.4 614.7M258.0 644.1C261.3 642.2 270.4 636.3 278.1 632.8C285.8 629.2 299.7 624.4 304.0 622.7M388.5 644.1C391.9 640.5 399.2 630.6 408.6 622.7C418.0 614.8 435.5 602.6 444.8 596.6C454.2 590.5 461.6 588.2 465.0 586.5M465.0 584.5C465.0 587.5 462.3 596.2 465.0 602.6C467.6 609.0 478.7 615.8 481.1 622.7C483.4 629.6 479.4 640.5 479.1 644.1M0.0 470.0C6.7 478.3 30.0 498.3 40.0 520.0C50.0 541.7 58.3 564.8 60.0 600.0C61.7 635.2 51.7 709.2 50.0 731.0M97.0 640.0C89.2 643.3 66.2 655.8 50.0 660.0C33.8 664.2 8.3 664.2 0.0 665.0M240.0 731.0C250.0 724.2 276.7 698.5 300.0 690.0C323.3 681.5 360.0 687.7 380.0 680.0C400.0 672.3 413.3 650.0 420.0 644.0" fill="none" stroke-linecap="round" stroke-linejoin="round"/>
<path id="rdM" d="M326.1 240.2C327.8 245.6 329.8 260.0 336.2 272.4C342.6 284.8 355.0 301.6 364.4 314.7C373.8 327.7 387.8 344.8 392.5 350.9M392.5 350.9C397.9 347.5 414.0 338.1 424.7 330.7C435.5 323.4 446.9 313.3 456.9 306.6C467.0 299.9 476.1 295.5 485.1 290.5C494.1 285.5 506.7 278.8 511.0 276.4M97.0 362.0C101.7 367.1 117.1 383.8 125.2 392.2C133.2 400.6 141.9 402.6 145.3 412.4C148.6 422.1 146.1 439.5 145.3 450.6C144.5 461.6 141.3 470.2 140.3 478.7C139.3 487.3 139.4 498.2 139.3 502.1M376.4 360.0C379.1 362.7 386.5 370.1 392.5 376.1C398.6 382.2 407.3 390.2 412.7 396.3C418.0 402.3 421.7 405.3 424.7 412.4C427.7 419.4 428.1 430.8 430.8 438.5C433.4 446.2 436.5 452.6 440.8 458.6C445.2 464.7 449.5 468.7 456.9 474.7C464.3 480.8 478.4 490.3 485.1 494.8C491.8 499.4 495.1 500.9 497.2 502.1M511.0 374.1C514.4 372.8 524.4 368.8 531.1 366.1C537.8 363.4 545.9 360.0 551.2 358.0C556.6 356.0 561.3 354.7 563.3 354.0M651.8 502.1C655.2 501.2 665.3 498.1 672.0 496.9C678.7 495.6 684.4 496.9 692.1 494.8C699.8 492.8 713.7 486.5 718.0 484.8M412.7 572.4C412.3 576.8 411.6 590.2 410.6 598.6C409.6 607.0 407.6 617.0 406.6 622.7C405.6 628.4 404.9 631.1 404.6 632.8M404.6 626.7L416.7 644.1M416.7 574.4C421.4 575.8 436.8 580.8 444.8 582.5C452.9 584.2 459.3 585.5 465.0 584.5C470.7 583.5 475.0 580.8 479.1 576.4C483.1 572.1 486.4 565.4 489.1 558.3C491.8 551.3 493.1 541.6 495.1 534.2C497.2 526.8 499.8 519.4 501.2 514.1C502.5 508.7 502.9 504.0 503.2 502.0M404.6 624.7C408.0 623.1 418.0 617.7 424.7 614.7C431.4 611.7 437.5 608.6 444.8 606.6C452.2 604.6 461.6 603.3 469.0 602.6C476.4 601.9 482.1 603.6 489.1 602.6C496.1 601.6 507.4 597.6 511.0 596.6M667.9 502.0C670.6 505.0 678.7 514.1 684.0 520.1C689.4 526.1 695.4 533.2 700.1 538.2C704.8 543.2 709.2 548.6 712.2 550.3C715.2 552.0 717.1 548.6 718.0 548.3" fill="none" stroke-linecap="round" stroke-linejoin="round"/>
<path id="rdW" d="M148.5 206.0C149.3 207.8 152.5 212.8 153.5 216.7C154.4 220.5 154.7 224.1 154.2 229.1C153.7 234.1 153.0 239.5 150.3 246.9C147.6 254.3 142.0 263.7 137.9 273.5C133.7 283.3 129.0 295.1 125.4 305.5C121.9 315.9 120.1 327.5 116.5 336.0C113.0 344.6 107.4 352.6 104.1 357.0C100.8 361.4 98.2 361.4 97.0 362.3M97.0 614.7C100.4 614.0 110.4 611.5 117.1 610.7C123.8 609.8 130.5 609.0 137.2 609.6C143.9 610.3 151.3 615.8 157.4 614.7C163.4 613.5 167.4 607.6 173.5 602.6C179.5 597.6 186.2 591.2 193.6 584.5C201.0 577.8 211.7 567.7 217.7 562.4C223.8 557.0 225.8 554.5 229.8 552.3C233.8 550.1 235.5 549.1 241.9 549.3C248.2 549.5 257.7 551.5 268.0 553.3C278.4 555.2 298.0 559.2 304.0 560.4M304.0 560.4C309.0 560.7 322.8 561.4 334.2 562.4C345.6 563.4 359.3 565.0 372.4 566.4C385.5 567.7 405.3 569.1 412.7 570.4C420.0 571.8 416.0 573.8 416.7 574.4M304.0 622.7C308.7 620.7 322.1 614.7 332.2 610.7C342.2 606.6 355.0 602.9 364.4 598.6C373.8 594.2 380.5 588.9 388.5 584.5C396.6 580.1 408.6 574.4 412.7 572.4M511.0 582.5C514.4 580.5 525.1 574.8 531.1 570.4C537.2 566.1 541.9 560.4 547.2 556.3C552.6 552.3 556.6 549.3 563.3 546.3C570.0 543.2 582.1 541.9 587.5 538.2C592.8 534.5 589.5 527.8 595.5 524.1C601.5 520.4 614.3 519.1 623.7 516.1C633.1 513.1 644.5 508.4 651.8 506.0C659.2 503.7 665.3 502.7 667.9 502.0M718.0 485.0C725.0 483.8 744.2 480.2 760.0 478.0C775.8 475.8 804.2 473.0 813.0 472.0" fill="none" stroke-linecap="round" stroke-linejoin="round"/>
<g id="shd"><ellipse cx="432.5" cy="122.5" rx="37.5" ry="52.5" opacity="0.3"/><ellipse cx="766.5" cy="250.0" rx="46.5" ry="50.0" opacity="0.3"/><ellipse cx="632.5" cy="690.5" rx="32.5" ry="40.5" opacity="0.3"/><ellipse cx="45.0" cy="390.0" rx="45.0" ry="60.0" opacity="0.2"/><ellipse cx="75.0" cy="85.0" rx="45.0" ry="25.0" opacity="0.2"/><ellipse cx="233.6" cy="338.9" rx="17.7" ry="23.0" opacity="0.12" transform="rotate(45 233.6 338.9)"/><ellipse cx="267.1" cy="315.9" rx="15.9" ry="24.7" opacity="0.08000000000000002" transform="rotate(45 267.1 315.9)"/><ellipse cx="290.1" cy="367.1" rx="21.2" ry="19.4" opacity="0.08800000000000001" transform="rotate(45 290.1 367.1)"/><ellipse cx="321.9" cy="407.8" rx="14.1" ry="31.8" opacity="0.12" transform="rotate(45 321.9 407.8)"/><ellipse cx="351.9" cy="441.3" rx="15.9" ry="19.4" opacity="0.12" transform="rotate(45 351.9 441.3)"/><ellipse cx="385.5" cy="476.6" rx="17.7" ry="19.4" opacity="0.08000000000000002" transform="rotate(45 385.5 476.6)"/><ellipse cx="194.7" cy="368.9" rx="21.2" ry="17.7" opacity="0.08000000000000002" transform="rotate(45 194.7 368.9)"/><ellipse cx="253.0" cy="386.6" rx="19.4" ry="14.1" opacity="0.08000000000000002" transform="rotate(45 253.0 386.6)"/><ellipse cx="290.1" cy="451.9" rx="14.1" ry="15.9" opacity="0.08000000000000002" transform="rotate(45 290.1 451.9)"/><ellipse cx="339.6" cy="490.8" rx="17.7" ry="19.4" opacity="0.08000000000000002" transform="rotate(45 339.6 490.8)"/><ellipse cx="554.3" cy="234.2" rx="17.1" ry="22.1" opacity="0.16" transform="rotate(40 554.3 234.2)"/><ellipse cx="635.7" cy="242.2" rx="12.1" ry="16.1" opacity="0.16" transform="rotate(40 635.7 242.2)"/><ellipse cx="680.0" cy="246.2" rx="12.1" ry="12.1" opacity="0.16" transform="rotate(40 680.0 246.2)"/><ellipse cx="629.7" cy="319.7" rx="22.1" ry="17.1" opacity="0.16" transform="rotate(40 629.7 319.7)"/><ellipse cx="695.0" cy="291.5" rx="23.0" ry="15.1" opacity="0.16" transform="rotate(40 695.0 291.5)"/><ellipse cx="576.4" cy="304.6" rx="15.1" ry="14.1" opacity="0.16" transform="rotate(40 576.4 304.6)"/></g>
<g id="lit"><ellipse cx="170.0" cy="150.0" rx="50.0" ry="50.0" opacity="0.25"/><ellipse cx="700.0" cy="135.0" rx="100.0" ry="55.0" opacity="0.2"/><ellipse cx="771.5" cy="510.0" rx="41.5" ry="90.0" opacity="0.2"/><ellipse cx="250.0" cy="695.5" rx="150.0" ry="35.5" opacity="0.15"/><ellipse cx="205.3" cy="319.5" rx="14.1" ry="21.2" opacity="0.36" transform="rotate(45 205.3 319.5)"/><ellipse cx="254.8" cy="354.8" rx="14.1" ry="21.2" opacity="0.36" transform="rotate(45 254.8 354.8)"/><ellipse cx="298.9" cy="411.3" rx="12.4" ry="24.7" opacity="0.36" transform="rotate(45 298.9 411.3)"/><ellipse cx="268.9" cy="421.9" rx="17.7" ry="17.7" opacity="0.3" transform="rotate(45 268.9 421.9)"/><ellipse cx="323.7" cy="464.3" rx="12.4" ry="17.7" opacity="0.3" transform="rotate(45 323.7 464.3)"/><ellipse cx="191.2" cy="418.4" rx="21.2" ry="28.3" opacity="0.24" transform="rotate(45 191.2 418.4)"/><ellipse cx="589.5" cy="229.1" rx="12.1" ry="17.1" opacity="0.45" transform="rotate(40 589.5 229.1)"/><ellipse cx="605.6" cy="259.3" rx="10.1" ry="13.1" opacity="0.45" transform="rotate(40 605.6 259.3)"/><ellipse cx="631.7" cy="278.4" rx="8.0" ry="12.1" opacity="0.45" transform="rotate(40 631.7 278.4)"/><ellipse cx="656.9" cy="232.2" rx="7.0" ry="14.1" opacity="0.45" transform="rotate(40 656.9 232.2)"/><ellipse cx="698.1" cy="262.3" rx="10.1" ry="10.1" opacity="0.45" transform="rotate(40 698.1 262.3)"/><ellipse cx="543.2" cy="292.5" rx="12.1" ry="10.1" opacity="0.45" transform="rotate(40 543.2 292.5)"/></g>
<path id="lake" d="M249.8 206.0L253.3 209.6L267.5 214.0L276.4 211.3L285.3 207.8L285.3 206.0ZM320.1 206.0L324.1 218.1L334.2 230.1L350.3 233.2L364.4 232.2L380.5 222.1L394.5 206.0ZM243.8 57.0L239.0 76.0L230.8 104.5L227.2 128.0L227.2 154.0L230.8 178.0L238.0 197.0L243.8 207.0L394.3 207.0L396.6 182.7L391.9 163.7L380.0 144.8L365.8 121.0L354.0 104.5L342.0 88.0L331.5 79.6L346.9 69.0L354.0 57.0Z"/>
<path id="blk" d="M149.3 452.6L160.4 450.6L161.4 456.6L150.3 458.6ZM595.5 384.2L601.5 384.2L601.5 391.2L595.5 391.2ZM679.0 460.6L686.1 461.6L684.0 475.7L677.0 473.7ZM149.3 549.3L164.4 549.3L164.4 556.3L149.3 556.3ZM127.2 615.7L145.3 614.7L145.3 622.7L127.2 623.7ZM215.7 620.7L221.7 620.7L221.7 626.7L215.7 626.7ZM630.7 543.2L642.8 543.2L642.8 550.3L630.7 550.3ZM696.1 576.4L704.2 571.4L710.2 579.5L702.1 584.5Z"/></defs>
<g id="dark"><g filter="url(#bl)"><use href="#shd" fill="#383838"/><use href="#lit" fill="#505050"/></g><use href="#lake" fill="#3a4049"/><use href="#blk" fill="#4c4c4c"/><use href="#rdc" stroke="#515151" stroke-width=".7"/><use href="#rdr" stroke="#3c3c3c" stroke-width=".8"/><use href="#rds" stroke="#525252" stroke-width="1.3"/><use href="#rdm" stroke="#545454" stroke-width="2.2"/><use href="#rdM" stroke="#565656" stroke-width="3.4"/><use href="#rdW" stroke="#565656" stroke-width="4.5"/><g font-family="Liberation Sans, sans-serif" text-anchor="middle"><text x="432.8" y="279.4" font-size="25" fill="#333" letter-spacing="-.9">Como</text><text x="361.3" y="310.6" font-size="10" fill="#2b2b2b" transform="rotate(57 361.3 310.6)" dy=".35em" letter-spacing="-.35">Viale Varese</text><text x="347.3" y="333.8" font-size="10" fill="#2b2b2b" transform="rotate(55 347.3 333.8)" dy=".35em" letter-spacing="-.35">Viale Innocenzo XI</text><text x="486.1" y="232.2" font-size="10" fill="#2b2b2b" transform="rotate(38 486.1 232.2)" dy=".35em" letter-spacing="-.35">Via Francesco Crispi</text><text x="481.1" y="322.7" font-size="10" fill="#2b2b2b" transform="rotate(55 481.1 322.7)" dy=".35em" letter-spacing="-.35">Via Dante Alighieri</text><text x="594.5" y="347.9" font-size="10" fill="#2b2b2b" transform="rotate(-3 594.5 347.9)" dy=".35em" letter-spacing="-.35">Via Rienza</text><text x="135.2" y="418.4" font-size="11.5" fill="#292929" letter-spacing=".7">Prestino</text><text x="656.9" y="474.3" font-size="11.5" fill="#292929" letter-spacing=".7">Lora</text><text x="200.2" y="544.3" font-size="11.5" fill="#292929" letter-spacing=".7">Breccia</text><text x="287.1" y="605.0" font-size="11.5" fill="#292929" letter-spacing=".7">Rebbio</text><text x="169.8" y="606.6" font-size="10" fill="#2b2b2b" transform="rotate(-33 169.8 606.6)" dy=".35em" letter-spacing="-.35">Via Varesina</text><text x="408.6" y="593.5" font-size="11.5" fill="#292929" letter-spacing=".7">Camerlata</text><text x="337.2" y="628.4" font-size="10" fill="#2b2b2b" transform="rotate(-30 337.2 628.4)" dy=".35em" letter-spacing="-.35">Via Pasquale Paoli</text><text x="623.3" y="518.5" font-size="10" fill="#2b2b2b" transform="rotate(-21 623.3 518.5)" dy=".35em" letter-spacing="-.35">Via Oltrecolle</text><text x="518.0" y="586.5" font-size="10" fill="#2b2b2b" transform="rotate(-28 518.0 586.5)" dy=".35em" letter-spacing="-.35">Via Oltrecolle</text><text x="140.0" y="133.0" font-size="10" fill="#2b2b2b" transform="rotate(35 140.0 133.0)" dy=".35em" letter-spacing="-.35">Via Valeria</text><text x="222.0" y="110.0" font-size="10" fill="#2b2b2b" transform="rotate(-57 222.0 110.0)" dy=".35em" letter-spacing="-.35">Via per Cernobbio</text><text x="373.0" y="142.0" font-size="10" fill="#2b2b2b" transform="rotate(55 373.0 142.0)" dy=".35em" letter-spacing="-.35">Viale Geno</text><text x="403.0" y="163.0" font-size="10" fill="#2b2b2b" transform="rotate(55 403.0 163.0)" dy=".35em" letter-spacing="-.35">Via Torno</text><text x="534.0" y="143.0" font-size="14" fill="#292929" letter-spacing="-.3">Brunate</text><text x="25.0" y="298.0" font-size="14" fill="#292929" letter-spacing="-.3">San Fermo</text><text x="22.0" y="315.0" font-size="14" fill="#292929" letter-spacing="-.3">della Battaglia</text><text x="84.0" y="644.0" font-size="11.5" fill="#292929" letter-spacing=".7">Lazzago</text><text x="752.0" y="373.0" font-size="11.5" fill="#292929" letter-spacing=".7">Camnago Volta</text><text x="783.0" y="543.0" font-size="14.5" fill="#292929" letter-spacing="-.3">Lipomo</text><text x="225.0" y="679.0" font-size="10" fill="#2b2b2b" dy=".35em" letter-spacing="-.35">Via Cecilio</text><text x="413.0" y="686.0" font-size="10" fill="#2b2b2b" transform="rotate(-76 413.0 686.0)" dy=".35em" letter-spacing="-.35">Via Belvedere</text><text x="457.0" y="686.0" font-size="10" fill="#2b2b2b" transform="rotate(52 457.0 686.0)" dy=".35em" letter-spacing="-.35">Via Canturina</text><text x="457.0" y="364.0" font-size="10" fill="#2b2b2b" transform="rotate(75 457.0 364.0)" dy=".35em" letter-spacing="-.35">Via Mentana</text><text x="429.0" y="374.0" font-size="10" fill="#2b2b2b" transform="rotate(79 429.0 374.0)" dy=".35em" letter-spacing="-.35">Via Milano</text><text x="507.5" y="390.0" font-size="10" fill="#2b2b2b" transform="rotate(-30 507.5 390.0)" dy=".35em" letter-spacing="-.35">Via Castelnuovo</text><text x="469.0" y="484.0" font-size="10" fill="#2b2b2b" transform="rotate(41 469.0 484.0)" dy=".35em" letter-spacing="-.35">Via Napoleona</text><text x="219.0" y="230.0" font-size="10" fill="#2b2b2b" transform="rotate(42 219.0 230.0)" dy=".35em" letter-spacing="-.35">Via Nino Bixio</text><text x="232.0" y="212.0" font-size="10" fill="#2b2b2b" transform="rotate(42 232.0 212.0)" dy=".35em" letter-spacing="-.35">Via Borgovico</text><text x="105.5" y="349.0" font-size="10" fill="#2b2b2b" transform="rotate(-63 105.5 349.0)" dy=".35em" letter-spacing="-.35">Via San Fermo</text></g></g>
<g clip-path="url(#fc)"><rect x="97" y="206" width="621" height="438" fill="#e9e9e9"/><g id="light"><g filter="url(#blg)"><rect x="67.5" y="176.5" width="30.0" height="30.0" fill="#e8e8e8"/><rect x="97.0" y="176.5" width="30.0" height="30.0" fill="#e8e8e8"/><rect x="126.5" y="176.5" width="30.0" height="30.0" fill="#d4d4d4"/><rect x="156.0" y="176.5" width="30.0" height="30.0" fill="#bcbcbc"/><rect x="185.5" y="176.5" width="30.0" height="30.0" fill="#c8c8c8"/><rect x="215.0" y="176.5" width="30.0" height="30.0" fill="#e8e8e8"/><rect x="244.6" y="176.5" width="30.0" height="30.0" fill="#e8e8e8"/><rect x="274.1" y="176.5" width="30.0" height="30.0" fill="#e8e8e8"/><rect x="303.6" y="176.5" width="30.0" height="30.0" fill="#e8e8e8"/><rect x="333.1" y="176.5" width="30.0" height="30.0" fill="#e8e8e8"/><rect x="362.6" y="176.5" width="30.0" height="30.0" fill="#e8e8e8"/><rect x="392.1" y="176.5" width="30.0" height="30.0" fill="#e8e8e8"/><rect x="421.6" y="176.5" width="30.0" height="30.0" fill="#e8e8e8"/><rect x="451.1" y="176.5" width="30.0" height="30.0" fill="#e8e8e8"/><rect x="480.6" y="176.5" width="30.0" height="30.0" fill="#dfdfdf"/><rect x="510.1" y="176.5" width="30.0" height="30.0" fill="#d4d4d4"/><rect x="539.7" y="176.5" width="30.0" height="30.0" fill="#c8c8c8"/><rect x="569.2" y="176.5" width="30.0" height="30.0" fill="#e8e8e8"/><rect x="598.7" y="176.5" width="30.0" height="30.0" fill="#d4d4d4"/><rect x="628.2" y="176.5" width="30.0" height="30.0" fill="#c8c8c8"/><rect x="657.7" y="176.5" width="30.0" height="30.0" fill="#d4d4d4"/><rect x="687.2" y="176.5" width="30.0" height="30.0" fill="#d4d4d4"/><rect x="716.7" y="176.5" width="30.0" height="30.0" fill="#d4d4d4"/><rect x="67.5" y="206.0" width="30.0" height="30.0" fill="#e8e8e8"/><rect x="97.0" y="206.0" width="30.0" height="30.0" fill="#e8e8e8"/><rect x="126.5" y="206.0" width="30.0" height="30.0" fill="#d4d4d4"/><rect x="156.0" y="206.0" width="30.0" height="30.0" fill="#bcbcbc"/><rect x="185.5" y="206.0" width="30.0" height="30.0" fill="#c8c8c8"/><rect x="215.0" y="206.0" width="30.0" height="30.0" fill="#e8e8e8"/><rect x="244.6" y="206.0" width="30.0" height="30.0" fill="#e8e8e8"/><rect x="274.1" y="206.0" width="30.0" height="30.0" fill="#e8e8e8"/><rect x="303.6" y="206.0" width="30.0" height="30.0" fill="#e8e8e8"/><rect x="333.1" y="206.0" width="30.0" height="30.0" fill="#e8e8e8"/><rect x="362.6" y="206.0" width="30.0" height="30.0" fill="#e8e8e8"/><rect x="392.1" y="206.0" width="30.0" height="30.0" fill="#e8e8e8"/><rect x="421.6" y="206.0" width="30.0" height="30.0" fill="#e8e8e8"/><rect x="451.1" y="206.0" width="30.0" height="30.0" fill="#e8e8e8"/><rect x="480.6" y="206.0" width="30.0" height="30.0" fill="#dfdfdf"/><rect x="510.1" y="206.0" width="30.0" height="30.0" fill="#d4d4d4"/><rect x="539.7" y="206.0" width="30.0" height="30.0" fill="#c8c8c8"/><rect x="569.2" y="206.0" width="30.0" height="30.0" fill="#e8e8e8"/><rect x="598.7" y="206.0" width="30.0" height="30.0" fill="#d4d4d4"/><rect x="628.2" y="206.0" width="30.0" height="30.0" fill="#c8c8c8"/><rect x="657.7" y="206.0" width="30.0" height="30.0" fill="#d4d4d4"/><rect x="687.2" y="206.0" width="30.0" height="30.0" fill="#d4d4d4"/><rect x="716.7" y="206.0" width="30.0" height="30.0" fill="#d4d4d4"/><rect x="67.5" y="235.5" width="30.0" height="30.0" fill="#dfdfdf"/><rect x="97.0" y="235.5" width="30.0" height="30.0" fill="#dfdfdf"/><rect x="126.5" y="235.5" width="30.0" height="30.0" fill="#c8c8c8"/><rect x="156.0" y="235.5" width="30.0" height="30.0" fill="#b0b0b0"/><rect x="185.5" y="235.5" width="30.0" height="30.0" fill="#d4d4d4"/><rect x="215.0" y="235.5" width="30.0" height="30.0" fill="#e8e8e8"/><rect x="244.6" y="235.5" width="30.0" height="30.0" fill="#e8e8e8"/><rect x="274.1" y="235.5" width="30.0" height="30.0" fill="#e8e8e8"/><rect x="303.6" y="235.5" width="30.0" height="30.0" fill="#e8e8e8"/><rect x="333.1" y="235.5" width="30.0" height="30.0" fill="#e8e8e8"/><rect x="362.6" y="235.5" width="30.0" height="30.0" fill="#e8e8e8"/><rect x="392.1" y="235.5" width="30.0" height="30.0" fill="#e8e8e8"/><rect x="421.6" y="235.5" width="30.0" height="30.0" fill="#e8e8e8"/><rect x="451.1" y="235.5" width="30.0" height="30.0" fill="#e8e8e8"/><rect x="480.6" y="235.5" width="30.0" height="30.0" fill="#dfdfdf"/><rect x="510.1" y="235.5" width="30.0" height="30.0" fill="#dfdfdf"/><rect x="539.7" y="235.5" width="30.0" height="30.0" fill="#c8c8c8"/><rect x="569.2" y="235.5" width="30.0" height="30.0" fill="#d4d4d4"/><rect x="598.7" y="235.5" width="30.0" height="30.0" fill="#e8e8e8"/><rect x="628.2" y="235.5" width="30.0" height="30.0" fill="#c8c8c8"/><rect x="657.7" y="235.5" width="30.0" height="30.0" fill="#d4d4d4"/><rect x="687.2" y="235.5" width="30.0" height="30.0" fill="#d4d4d4"/><rect x="716.7" y="235.5" width="30.0" height="30.0" fill="#d4d4d4"/><rect x="67.5" y="265.0" width="30.0" height="30.0" fill="#d4d4d4"/><rect x="97.0" y="265.0" width="30.0" height="30.0" fill="#d4d4d4"/><rect x="126.5" y="265.0" width="30.0" height="30.0" fill="#c8c8c8"/><rect x="156.0" y="265.0" width="30.0" height="30.0" fill="#c8c8c8"/><rect x="185.5" y="265.0" width="30.0" height="30.0" fill="#f2f2f2"/><rect x="215.0" y="265.0" width="30.0" height="30.0" fill="#e8e8e8"/><rect x="244.6" y="265.0" width="30.0" height="30.0" fill="#bcbcbc"/><rect x="274.1" y="265.0" width="30.0" height="30.0" fill="#e8e8e8"/><rect x="303.6" y="265.0" width="30.0" height="30.0" fill="#e8e8e8"/><rect x="333.1" y="265.0" width="30.0" height="30.0" fill="#e8e8e8"/><rect x="362.6" y="265.0" width="30.0" height="30.0" fill="#e8e8e8"/><rect x="392.1" y="265.0" width="30.0" height="30.0" fill="#e8e8e8"/><rect x="421.6" y="265.0" width="30.0" height="30.0" fill="#e8e8e8"/><rect x="451.1" y="265.0" width="30.0" height="30.0" fill="#e8e8e8"/><rect x="480.6" y="265.0" width="30.0" height="30.0" fill="#e8e8e8"/><rect x="510.1" y="265.0" width="30.0" height="30.0" fill="#e8e8e8"/><rect x="539.7" y="265.0" width="30.0" height="30.0" fill="#d4d4d4"/><rect x="569.2" y="265.0" width="30.0" height="30.0" fill="#d4d4d4"/><rect x="598.7" y="265.0" width="30.0" height="30.0" fill="#d4d4d4"/><rect x="628.2" y="265.0" width="30.0" height="30.0" fill="#c8c8c8"/><rect x="657.7" y="265.0" width="30.0" height="30.0" fill="#c8c8c8"/><rect x="687.2" y="265.0" width="30.0" height="30.0" fill="#c8c8c8"/><rect x="716.7" y="265.0" width="30.0" height="30.0" fill="#c8c8c8"/><rect x="67.5" y="294.5" width="30.0" height="30.0" fill="#f2f2f2"/><rect x="97.0" y="294.5" width="30.0" height="30.0" fill="#f2f2f2"/><rect x="126.5" y="294.5" width="30.0" height="30.0" fill="#f2f2f2"/><rect x="156.0" y="294.5" width="30.0" height="30.0" fill="#fafafa"/><rect x="185.5" y="294.5" width="30.0" height="30.0" fill="#e8e8e8"/><rect x="215.0" y="294.5" width="30.0" height="30.0" fill="#d4d4d4"/><rect x="244.6" y="294.5" width="30.0" height="30.0" fill="#c8c8c8"/><rect x="274.1" y="294.5" width="30.0" height="30.0" fill="#dfdfdf"/><rect x="303.6" y="294.5" width="30.0" height="30.0" fill="#e8e8e8"/><rect x="333.1" y="294.5" width="30.0" height="30.0" fill="#e8e8e8"/><rect x="362.6" y="294.5" width="30.0" height="30.0" fill="#e8e8e8"/><rect x="392.1" y="294.5" width="30.0" height="30.0" fill="#e8e8e8"/><rect x="421.6" y="294.5" width="30.0" height="30.0" fill="#e8e8e8"/><rect x="451.1" y="294.5" width="30.0" height="30.0" fill="#e8e8e8"/><rect x="480.6" y="294.5" width="30.0" height="30.0" fill="#e8e8e8"/><rect x="510.1" y="294.5" width="30.0" height="30.0" fill="#e8e8e8"/><rect x="539.7" y="294.5" width="30.0" height="30.0" fill="#dfdfdf"/><rect x="569.2" y="294.5" width="30.0" height="30.0" fill="#d4d4d4"/><rect x="598.7" y="294.5" width="30.0" height="30.0" fill="#c8c8c8"/><rect x="628.2" y="294.5" width="30.0" height="30.0" fill="#bcbcbc"/><rect x="657.7" y="294.5" width="30.0" height="30.0" fill="#c8c8c8"/><rect x="687.2" y="294.5" width="30.0" height="30.0" fill="#c8c8c8"/><rect x="716.7" y="294.5" width="30.0" height="30.0" fill="#c8c8c8"/><rect x="67.5" y="324.0" width="30.0" height="30.0" fill="#f2f2f2"/><rect x="97.0" y="324.0" width="30.0" height="30.0" fill="#f2f2f2"/><rect x="126.5" y="324.0" width="30.0" height="30.0" fill="#f2f2f2"/><rect x="156.0" y="324.0" width="30.0" height="30.0" fill="#f2f2f2"/><rect x="185.5" y="324.0" width="30.0" height="30.0" fill="#dfdfdf"/><rect x="215.0" y="324.0" width="30.0" height="30.0" fill="#bcbcbc"/><rect x="244.6" y="324.0" width="30.0" height="30.0" fill="#d4d4d4"/><rect x="274.1" y="324.0" width="30.0" height="30.0" fill="#c8c8c8"/><rect x="303.6" y="324.0" width="30.0" height="30.0" fill="#dfdfdf"/><rect x="333.1" y="324.0" width="30.0" height="30.0" fill="#e8e8e8"/><rect x="362.6" y="324.0" width="30.0" height="30.0" fill="#e8e8e8"/><rect x="392.1" y="324.0" width="30.0" height="30.0" fill="#e8e8e8"/><rect x="421.6" y="324.0" width="30.0" height="30.0" fill="#e8e8e8"/><rect x="451.1" y="324.0" width="30.0" height="30.0" fill="#e8e8e8"/><rect x="480.6" y="324.0" width="30.0" height="30.0" fill="#e8e8e8"/><rect x="510.1" y="324.0" width="30.0" height="30.0" fill="#e8e8e8"/><rect x="539.7" y="324.0" width="30.0" height="30.0" fill="#e8e8e8"/><rect x="569.2" y="324.0" width="30.0" height="30.0" fill="#dfdfdf"/><rect x="598.7" y="324.0" width="30.0" height="30.0" fill="#d4d4d4"/><rect x="628.2" y="324.0" width="30.0" height="30.0" fill="#c8c8c8"/><rect x="657.7" y="324.0" width="30.0" height="30.0" fill="#d4d4d4"/><rect x="687.2" y="324.0" width="30.0" height="30.0" fill="#dfdfdf"/><rect x="716.7" y="324.0" width="30.0" height="30.0" fill="#dfdfdf"/><rect x="67.5" y="353.6" width="30.0" height="30.0" fill="#e8e8e8"/><rect x="97.0" y="353.6" width="30.0" height="30.0" fill="#e8e8e8"/><rect x="126.5" y="353.6" width="30.0" height="30.0" fill="#e8e8e8"/><rect x="156.0" y="353.6" width="30.0" height="30.0" fill="#dfdfdf"/><rect x="185.5" y="353.6" width="30.0" height="30.0" fill="#d4d4d4"/><rect x="215.0" y="353.6" width="30.0" height="30.0" fill="#c8c8c8"/><rect x="244.6" y="353.6" width="30.0" height="30.0" fill="#c8c8c8"/><rect x="274.1" y="353.6" width="30.0" height="30.0" fill="#bcbcbc"/><rect x="303.6" y="353.6" width="30.0" height="30.0" fill="#c8c8c8"/><rect x="333.1" y="353.6" width="30.0" height="30.0" fill="#dfdfdf"/><rect x="362.6" y="353.6" width="30.0" height="30.0" fill="#e8e8e8"/><rect x="392.1" y="353.6" width="30.0" height="30.0" fill="#e8e8e8"/><rect x="421.6" y="353.6" width="30.0" height="30.0" fill="#e8e8e8"/><rect x="451.1" y="353.6" width="30.0" height="30.0" fill="#e8e8e8"/><rect x="480.6" y="353.6" width="30.0" height="30.0" fill="#e8e8e8"/><rect x="510.1" y="353.6" width="30.0" height="30.0" fill="#e8e8e8"/><rect x="539.7" y="353.6" width="30.0" height="30.0" fill="#f2f2f2"/><rect x="569.2" y="353.6" width="30.0" height="30.0" fill="#f2f2f2"/><rect x="598.7" y="353.6" width="30.0" height="30.0" fill="#f2f2f2"/><rect x="628.2" y="353.6" width="30.0" height="30.0" fill="#dfdfdf"/><rect x="657.7" y="353.6" width="30.0" height="30.0" fill="#f2f2f2"/><rect x="687.2" y="353.6" width="30.0" height="30.0" fill="#e8e8e8"/><rect x="716.7" y="353.6" width="30.0" height="30.0" fill="#e8e8e8"/><rect x="67.5" y="383.1" width="30.0" height="30.0" fill="#fafafa"/><rect x="97.0" y="383.1" width="30.0" height="30.0" fill="#fafafa"/><rect x="126.5" y="383.1" width="30.0" height="30.0" fill="#f2f2f2"/><rect x="156.0" y="383.1" width="30.0" height="30.0" fill="#e8e8e8"/><rect x="185.5" y="383.1" width="30.0" height="30.0" fill="#f2f2f2"/><rect x="215.0" y="383.1" width="30.0" height="30.0" fill="#dfdfdf"/><rect x="244.6" y="383.1" width="30.0" height="30.0" fill="#d4d4d4"/><rect x="274.1" y="383.1" width="30.0" height="30.0" fill="#d4d4d4"/><rect x="303.6" y="383.1" width="30.0" height="30.0" fill="#bcbcbc"/><rect x="333.1" y="383.1" width="30.0" height="30.0" fill="#c8c8c8"/><rect x="362.6" y="383.1" width="30.0" height="30.0" fill="#dfdfdf"/><rect x="392.1" y="383.1" width="30.0" height="30.0" fill="#e8e8e8"/><rect x="421.6" y="383.1" width="30.0" height="30.0" fill="#e8e8e8"/><rect x="451.1" y="383.1" width="30.0" height="30.0" fill="#e8e8e8"/><rect x="480.6" y="383.1" width="30.0" height="30.0" fill="#e8e8e8"/><rect x="510.1" y="383.1" width="30.0" height="30.0" fill="#f2f2f2"/><rect x="539.7" y="383.1" width="30.0" height="30.0" fill="#e8e8e8"/><rect x="569.2" y="383.1" width="30.0" height="30.0" fill="#dfdfdf"/><rect x="598.7" y="383.1" width="30.0" height="30.0" fill="#f2f2f2"/><rect x="628.2" y="383.1" width="30.0" height="30.0" fill="#dfdfdf"/><rect x="657.7" y="383.1" width="30.0" height="30.0" fill="#f2f2f2"/><rect x="687.2" y="383.1" width="30.0" height="30.0" fill="#e8e8e8"/><rect x="716.7" y="383.1" width="30.0" height="30.0" fill="#e8e8e8"/><rect x="67.5" y="412.6" width="30.0" height="30.0" fill="#fafafa"/><rect x="97.0" y="412.6" width="30.0" height="30.0" fill="#fafafa"/><rect x="126.5" y="412.6" width="30.0" height="30.0" fill="#fafafa"/><rect x="156.0" y="412.6" width="30.0" height="30.0" fill="#f2f2f2"/><rect x="185.5" y="412.6" width="30.0" height="30.0" fill="#f2f2f2"/><rect x="215.0" y="412.6" width="30.0" height="30.0" fill="#e8e8e8"/><rect x="244.6" y="412.6" width="30.0" height="30.0" fill="#dfdfdf"/><rect x="274.1" y="412.6" width="30.0" height="30.0" fill="#d4d4d4"/><rect x="303.6" y="412.6" width="30.0" height="30.0" fill="#bcbcbc"/><rect x="333.1" y="412.6" width="30.0" height="30.0" fill="#bcbcbc"/><rect x="362.6" y="412.6" width="30.0" height="30.0" fill="#d4d4d4"/><rect x="392.1" y="412.6" width="30.0" height="30.0" fill="#e8e8e8"/><rect x="421.6" y="412.6" width="30.0" height="30.0" fill="#e8e8e8"/><rect x="451.1" y="412.6" width="30.0" height="30.0" fill="#e8e8e8"/><rect x="480.6" y="412.6" width="30.0" height="30.0" fill="#e8e8e8"/><rect x="510.1" y="412.6" width="30.0" height="30.0" fill="#e8e8e8"/><rect x="539.7" y="412.6" width="30.0" height="30.0" fill="#d4d4d4"/><rect x="569.2" y="412.6" width="30.0" height="30.0" fill="#dfdfdf"/><rect x="598.7" y="412.6" width="30.0" height="30.0" fill="#f2f2f2"/><rect x="628.2" y="412.6" width="30.0" height="30.0" fill="#f2f2f2"/><rect x="657.7" y="412.6" width="30.0" height="30.0" fill="#f2f2f2"/><rect x="687.2" y="412.6" width="30.0" height="30.0" fill="#f2f2f2"/><rect x="716.7" y="412.6" width="30.0" height="30.0" fill="#f2f2f2"/><rect x="67.5" y="442.1" width="30.0" height="30.0" fill="#f2f2f2"/><rect x="97.0" y="442.1" width="30.0" height="30.0" fill="#f2f2f2"/><rect x="126.5" y="442.1" width="30.0" height="30.0" fill="#fafafa"/><rect x="156.0" y="442.1" width="30.0" height="30.0" fill="#f2f2f2"/><rect x="185.5" y="442.1" width="30.0" height="30.0" fill="#f2f2f2"/><rect x="215.0" y="442.1" width="30.0" height="30.0" fill="#e8e8e8"/><rect x="244.6" y="442.1" width="30.0" height="30.0" fill="#dfdfdf"/><rect x="274.1" y="442.1" width="30.0" height="30.0" fill="#c8c8c8"/><rect x="303.6" y="442.1" width="30.0" height="30.0" fill="#dfdfdf"/><rect x="333.1" y="442.1" width="30.0" height="30.0" fill="#bcbcbc"/><rect x="362.6" y="442.1" width="30.0" height="30.0" fill="#c8c8c8"/><rect x="392.1" y="442.1" width="30.0" height="30.0" fill="#dfdfdf"/><rect x="421.6" y="442.1" width="30.0" height="30.0" fill="#e8e8e8"/><rect x="451.1" y="442.1" width="30.0" height="30.0" fill="#e8e8e8"/><rect x="480.6" y="442.1" width="30.0" height="30.0" fill="#e8e8e8"/><rect x="510.1" y="442.1" width="30.0" height="30.0" fill="#e8e8e8"/><rect x="539.7" y="442.1" width="30.0" height="30.0" fill="#e8e8e8"/><rect x="569.2" y="442.1" width="30.0" height="30.0" fill="#f2f2f2"/><rect x="598.7" y="442.1" width="30.0" height="30.0" fill="#f2f2f2"/><rect x="628.2" y="442.1" width="30.0" height="30.0" fill="#f2f2f2"/><rect x="657.7" y="442.1" width="30.0" height="30.0" fill="#f2f2f2"/><rect x="687.2" y="442.1" width="30.0" height="30.0" fill="#f2f2f2"/><rect x="716.7" y="442.1" width="30.0" height="30.0" fill="#f2f2f2"/><rect x="67.5" y="471.6" width="30.0" height="30.0" fill="#f2f2f2"/><rect x="97.0" y="471.6" width="30.0" height="30.0" fill="#f2f2f2"/><rect x="126.5" y="471.6" width="30.0" height="30.0" fill="#f2f2f2"/><rect x="156.0" y="471.6" width="30.0" height="30.0" fill="#e8e8e8"/><rect x="185.5" y="471.6" width="30.0" height="30.0" fill="#f2f2f2"/><rect x="215.0" y="471.6" width="30.0" height="30.0" fill="#f2f2f2"/><rect x="244.6" y="471.6" width="30.0" height="30.0" fill="#e8e8e8"/><rect x="274.1" y="471.6" width="30.0" height="30.0" fill="#dfdfdf"/><rect x="303.6" y="471.6" width="30.0" height="30.0" fill="#d4d4d4"/><rect x="333.1" y="471.6" width="30.0" height="30.0" fill="#c8c8c8"/><rect x="362.6" y="471.6" width="30.0" height="30.0" fill="#bcbcbc"/><rect x="392.1" y="471.6" width="30.0" height="30.0" fill="#d4d4d4"/><rect x="421.6" y="471.6" width="30.0" height="30.0" fill="#e8e8e8"/><rect x="451.1" y="471.6" width="30.0" height="30.0" fill="#e8e8e8"/><rect x="480.6" y="471.6" width="30.0" height="30.0" fill="#e8e8e8"/><rect x="510.1" y="471.6" width="30.0" height="30.0" fill="#e8e8e8"/><rect x="539.7" y="471.6" width="30.0" height="30.0" fill="#e8e8e8"/><rect x="569.2" y="471.6" width="30.0" height="30.0" fill="#f2f2f2"/><rect x="598.7" y="471.6" width="30.0" height="30.0" fill="#f2f2f2"/><rect x="628.2" y="471.6" width="30.0" height="30.0" fill="#e8e8e8"/><rect x="657.7" y="471.6" width="30.0" height="30.0" fill="#e8e8e8"/><rect x="687.2" y="471.6" width="30.0" height="30.0" fill="#e8e8e8"/><rect x="716.7" y="471.6" width="30.0" height="30.0" fill="#e8e8e8"/><rect x="67.5" y="501.1" width="30.0" height="30.0" fill="#e8e8e8"/><rect x="97.0" y="501.1" width="30.0" height="30.0" fill="#e8e8e8"/><rect x="126.5" y="501.1" width="30.0" height="30.0" fill="#e8e8e8"/><rect x="156.0" y="501.1" width="30.0" height="30.0" fill="#dfdfdf"/><rect x="185.5" y="501.1" width="30.0" height="30.0" fill="#e8e8e8"/><rect x="215.0" y="501.1" width="30.0" height="30.0" fill="#e8e8e8"/><rect x="244.6" y="501.1" width="30.0" height="30.0" fill="#dfdfdf"/><rect x="274.1" y="501.1" width="30.0" height="30.0" fill="#dfdfdf"/><rect x="303.6" y="501.1" width="30.0" height="30.0" fill="#dfdfdf"/><rect x="333.1" y="501.1" width="30.0" height="30.0" fill="#d4d4d4"/><rect x="362.6" y="501.1" width="30.0" height="30.0" fill="#c8c8c8"/><rect x="392.1" y="501.1" width="30.0" height="30.0" fill="#c8c8c8"/><rect x="421.6" y="501.1" width="30.0" height="30.0" fill="#bcbcbc"/><rect x="451.1" y="501.1" width="30.0" height="30.0" fill="#c8c8c8"/><rect x="480.6" y="501.1" width="30.0" height="30.0" fill="#dfdfdf"/><rect x="510.1" y="501.1" width="30.0" height="30.0" fill="#f2f2f2"/><rect x="539.7" y="501.1" width="30.0" height="30.0" fill="#f2f2f2"/><rect x="569.2" y="501.1" width="30.0" height="30.0" fill="#f2f2f2"/><rect x="598.7" y="501.1" width="30.0" height="30.0" fill="#f2f2f2"/><rect x="628.2" y="501.1" width="30.0" height="30.0" fill="#f2f2f2"/><rect x="657.7" y="501.1" width="30.0" height="30.0" fill="#e8e8e8"/><rect x="687.2" y="501.1" width="30.0" height="30.0" fill="#f2f2f2"/><rect x="716.7" y="501.1" width="30.0" height="30.0" fill="#f2f2f2"/><rect x="67.5" y="530.6" width="30.0" height="30.0" fill="#d4d4d4"/><rect x="97.0" y="530.6" width="30.0" height="30.0" fill="#d4d4d4"/><rect x="126.5" y="530.6" width="30.0" height="30.0" fill="#dfdfdf"/><rect x="156.0" y="530.6" width="30.0" height="30.0" fill="#d4d4d4"/><rect x="185.5" y="530.6" width="30.0" height="30.0" fill="#e8e8e8"/><rect x="215.0" y="530.6" width="30.0" height="30.0" fill="#dfdfdf"/><rect x="244.6" y="530.6" width="30.0" height="30.0" fill="#dfdfdf"/><rect x="274.1" y="530.6" width="30.0" height="30.0" fill="#dfdfdf"/><rect x="303.6" y="530.6" width="30.0" height="30.0" fill="#dfdfdf"/><rect x="333.1" y="530.6" width="30.0" height="30.0" fill="#d4d4d4"/><rect x="362.6" y="530.6" width="30.0" height="30.0" fill="#c8c8c8"/><rect x="392.1" y="530.6" width="30.0" height="30.0" fill="#c8c8c8"/><rect x="421.6" y="530.6" width="30.0" height="30.0" fill="#c8c8c8"/><rect x="451.1" y="530.6" width="30.0" height="30.0" fill="#c8c8c8"/><rect x="480.6" y="530.6" width="30.0" height="30.0" fill="#dfdfdf"/><rect x="510.1" y="530.6" width="30.0" height="30.0" fill="#f2f2f2"/><rect x="539.7" y="530.6" width="30.0" height="30.0" fill="#f2f2f2"/><rect x="569.2" y="530.6" width="30.0" height="30.0" fill="#f2f2f2"/><rect x="598.7" y="530.6" width="30.0" height="30.0" fill="#dfdfdf"/><rect x="628.2" y="530.6" width="30.0" height="30.0" fill="#dfdfdf"/><rect x="657.7" y="530.6" width="30.0" height="30.0" fill="#d4d4d4"/><rect x="687.2" y="530.6" width="30.0" height="30.0" fill="#e8e8e8"/><rect x="716.7" y="530.6" width="30.0" height="30.0" fill="#e8e8e8"/><rect x="67.5" y="560.1" width="30.0" height="30.0" fill="#d4d4d4"/><rect x="97.0" y="560.1" width="30.0" height="30.0" fill="#d4d4d4"/><rect x="126.5" y="560.1" width="30.0" height="30.0" fill="#dfdfdf"/><rect x="156.0" y="560.1" width="30.0" height="30.0" fill="#dfdfdf"/><rect x="185.5" y="560.1" width="30.0" height="30.0" fill="#dfdfdf"/><rect x="215.0" y="560.1" width="30.0" height="30.0" fill="#d4d4d4"/><rect x="244.6" y="560.1" width="30.0" height="30.0" fill="#dfdfdf"/><rect x="274.1" y="560.1" width="30.0" height="30.0" fill="#d4d4d4"/><rect x="303.6" y="560.1" width="30.0" height="30.0" fill="#dfdfdf"/><rect x="333.1" y="560.1" width="30.0" height="30.0" fill="#dfdfdf"/><rect x="362.6" y="560.1" width="30.0" height="30.0" fill="#dfdfdf"/><rect x="392.1" y="560.1" width="30.0" height="30.0" fill="#dfdfdf"/><rect x="421.6" y="560.1" width="30.0" height="30.0" fill="#dfdfdf"/><rect x="451.1" y="560.1" width="30.0" height="30.0" fill="#dfdfdf"/><rect x="480.6" y="560.1" width="30.0" height="30.0" fill="#e8e8e8"/><rect x="510.1" y="560.1" width="30.0" height="30.0" fill="#f2f2f2"/><rect x="539.7" y="560.1" width="30.0" height="30.0" fill="#f2f2f2"/><rect x="569.2" y="560.1" width="30.0" height="30.0" fill="#f2f2f2"/><rect x="598.7" y="560.1" width="30.0" height="30.0" fill="#dfdfdf"/><rect x="628.2" y="560.1" width="30.0" height="30.0" fill="#bcbcbc"/><rect x="657.7" y="560.1" width="30.0" height="30.0" fill="#d4d4d4"/><rect x="687.2" y="560.1" width="30.0" height="30.0" fill="#e8e8e8"/><rect x="716.7" y="560.1" width="30.0" height="30.0" fill="#e8e8e8"/><rect x="67.5" y="589.6" width="30.0" height="30.0" fill="#dfdfdf"/><rect x="97.0" y="589.6" width="30.0" height="30.0" fill="#dfdfdf"/><rect x="126.5" y="589.6" width="30.0" height="30.0" fill="#dfdfdf"/><rect x="156.0" y="589.6" width="30.0" height="30.0" fill="#dfdfdf"/><rect x="185.5" y="589.6" width="30.0" height="30.0" fill="#dfdfdf"/><rect x="215.0" y="589.6" width="30.0" height="30.0" fill="#d4d4d4"/><rect x="244.6" y="589.6" width="30.0" height="30.0" fill="#d4d4d4"/><rect x="274.1" y="589.6" width="30.0" height="30.0" fill="#d4d4d4"/><rect x="303.6" y="589.6" width="30.0" height="30.0" fill="#dfdfdf"/><rect x="333.1" y="589.6" width="30.0" height="30.0" fill="#dfdfdf"/><rect x="362.6" y="589.6" width="30.0" height="30.0" fill="#dfdfdf"/><rect x="392.1" y="589.6" width="30.0" height="30.0" fill="#dfdfdf"/><rect x="421.6" y="589.6" width="30.0" height="30.0" fill="#dfdfdf"/><rect x="451.1" y="589.6" width="30.0" height="30.0" fill="#e8e8e8"/><rect x="480.6" y="589.6" width="30.0" height="30.0" fill="#f2f2f2"/><rect x="510.1" y="589.6" width="30.0" height="30.0" fill="#f2f2f2"/><rect x="539.7" y="589.6" width="30.0" height="30.0" fill="#f2f2f2"/><rect x="569.2" y="589.6" width="30.0" height="30.0" fill="#d4d4d4"/><rect x="598.7" y="589.6" width="30.0" height="30.0" fill="#d4d4d4"/><rect x="628.2" y="589.6" width="30.0" height="30.0" fill="#bcbcbc"/><rect x="657.7" y="589.6" width="30.0" height="30.0" fill="#f2f2f2"/><rect x="687.2" y="589.6" width="30.0" height="30.0" fill="#f2f2f2"/><rect x="716.7" y="589.6" width="30.0" height="30.0" fill="#f2f2f2"/><rect x="67.5" y="619.1" width="30.0" height="30.0" fill="#dfdfdf"/><rect x="97.0" y="619.1" width="30.0" height="30.0" fill="#dfdfdf"/><rect x="126.5" y="619.1" width="30.0" height="30.0" fill="#dfdfdf"/><rect x="156.0" y="619.1" width="30.0" height="30.0" fill="#dfdfdf"/><rect x="185.5" y="619.1" width="30.0" height="30.0" fill="#d4d4d4"/><rect x="215.0" y="619.1" width="30.0" height="30.0" fill="#d4d4d4"/><rect x="244.6" y="619.1" width="30.0" height="30.0" fill="#d4d4d4"/><rect x="274.1" y="619.1" width="30.0" height="30.0" fill="#d4d4d4"/><rect x="303.6" y="619.1" width="30.0" height="30.0" fill="#dfdfdf"/><rect x="333.1" y="619.1" width="30.0" height="30.0" fill="#dfdfdf"/><rect x="362.6" y="619.1" width="30.0" height="30.0" fill="#dfdfdf"/><rect x="392.1" y="619.1" width="30.0" height="30.0" fill="#dfdfdf"/><rect x="421.6" y="619.1" width="30.0" height="30.0" fill="#dfdfdf"/><rect x="451.1" y="619.1" width="30.0" height="30.0" fill="#e8e8e8"/><rect x="480.6" y="619.1" width="30.0" height="30.0" fill="#f2f2f2"/><rect x="510.1" y="619.1" width="30.0" height="30.0" fill="#f2f2f2"/><rect x="539.7" y="619.1" width="30.0" height="30.0" fill="#e8e8e8"/><rect x="569.2" y="619.1" width="30.0" height="30.0" fill="#c8c8c8"/><rect x="598.7" y="619.1" width="30.0" height="30.0" fill="#d4d4d4"/><rect x="628.2" y="619.1" width="30.0" height="30.0" fill="#dfdfdf"/><rect x="657.7" y="619.1" width="30.0" height="30.0" fill="#fafafa"/><rect x="687.2" y="619.1" width="30.0" height="30.0" fill="#fafafa"/><rect x="716.7" y="619.1" width="30.0" height="30.0" fill="#fafafa"/><rect x="67.5" y="648.7" width="30.0" height="30.0" fill="#dfdfdf"/><rect x="97.0" y="648.7" width="30.0" height="30.0" fill="#dfdfdf"/><rect x="126.5" y="648.7" width="30.0" height="30.0" fill="#dfdfdf"/><rect x="156.0" y="648.7" width="30.0" height="30.0" fill="#dfdfdf"/><rect x="185.5" y="648.7" width="30.0" height="30.0" fill="#d4d4d4"/><rect x="215.0" y="648.7" width="30.0" height="30.0" fill="#d4d4d4"/><rect x="244.6" y="648.7" width="30.0" height="30.0" fill="#d4d4d4"/><rect x="274.1" y="648.7" width="30.0" height="30.0" fill="#d4d4d4"/><rect x="303.6" y="648.7" width="30.0" height="30.0" fill="#dfdfdf"/><rect x="333.1" y="648.7" width="30.0" height="30.0" fill="#dfdfdf"/><rect x="362.6" y="648.7" width="30.0" height="30.0" fill="#dfdfdf"/><rect x="392.1" y="648.7" width="30.0" height="30.0" fill="#dfdfdf"/><rect x="421.6" y="648.7" width="30.0" height="30.0" fill="#dfdfdf"/><rect x="451.1" y="648.7" width="30.0" height="30.0" fill="#e8e8e8"/><rect x="480.6" y="648.7" width="30.0" height="30.0" fill="#f2f2f2"/><rect x="510.1" y="648.7" width="30.0" height="30.0" fill="#f2f2f2"/><rect x="539.7" y="648.7" width="30.0" height="30.0" fill="#e8e8e8"/><rect x="569.2" y="648.7" width="30.0" height="30.0" fill="#c8c8c8"/><rect x="598.7" y="648.7" width="30.0" height="30.0" fill="#d4d4d4"/><rect x="628.2" y="648.7" width="30.0" height="30.0" fill="#dfdfdf"/><rect x="657.7" y="648.7" width="30.0" height="30.0" fill="#fafafa"/><rect x="687.2" y="648.7" width="30.0" height="30.0" fill="#fafafa"/><rect x="716.7" y="648.7" width="30.0" height="30.0" fill="#fafafa"/></g><g filter="url(#bl)"><use href="#shd" fill="#6a6a6a"/><use href="#lit" fill="#fff"/></g><use href="#lake" fill="#b9d8f7"/><use href="#blk" fill="#dedede"/><use href="#rdc" stroke="#fff" stroke-opacity=".85" stroke-width=".7"/><use href="#rdr" stroke="#c4c4c4" stroke-width=".8"/><use href="#rds" stroke="#fff" stroke-width="1.4"/><use href="#rdm" stroke="#fff" stroke-width="2.3"/><use href="#rdM" stroke="#fff" stroke-width="3.6"/><use href="#rdW" stroke="#fff" stroke-opacity=".9" stroke-width="4.8"/><g font-family="Liberation Sans, sans-serif" text-anchor="middle"><text x="432.8" y="279.4" font-size="25" fill="#bdbdbd" letter-spacing="-.9">Como</text><text x="361.3" y="310.6" font-size="10" fill="#5a5a5a" transform="rotate(57 361.3 310.6)" dy=".35em" letter-spacing="-.35">Viale Varese</text><text x="347.3" y="333.8" font-size="10" fill="#5a5a5a" transform="rotate(55 347.3 333.8)" dy=".35em" letter-spacing="-.35">Viale Innocenzo XI</text><text x="486.1" y="232.2" font-size="10" fill="#5a5a5a" transform="rotate(38 486.1 232.2)" dy=".35em" letter-spacing="-.35">Via Francesco Crispi</text><text x="481.1" y="322.7" font-size="10" fill="#5a5a5a" transform="rotate(55 481.1 322.7)" dy=".35em" letter-spacing="-.35">Via Dante Alighieri</text><text x="594.5" y="347.9" font-size="10" fill="#5a5a5a" transform="rotate(-3 594.5 347.9)" dy=".35em" letter-spacing="-.35">Via Rienza</text><text x="135.2" y="418.4" font-size="11.5" fill="#818181" letter-spacing=".7" stroke="#818181" stroke-width=".25">Prestino</text><text x="656.9" y="474.3" font-size="11.5" fill="#818181" letter-spacing=".7" stroke="#818181" stroke-width=".25">Lora</text><text x="200.2" y="544.3" font-size="11.5" fill="#818181" letter-spacing=".7" stroke="#818181" stroke-width=".25">Breccia</text><text x="287.1" y="605.0" font-size="11.5" fill="#818181" letter-spacing=".7" stroke="#818181" stroke-width=".25">Rebbio</text><text x="169.8" y="606.6" font-size="10" fill="#5a5a5a" transform="rotate(-33 169.8 606.6)" dy=".35em" letter-spacing="-.35">Via Varesina</text><text x="408.6" y="593.5" font-size="11.5" fill="#818181" letter-spacing=".7" stroke="#818181" stroke-width=".25">Camerlata</text><text x="337.2" y="628.4" font-size="10" fill="#5a5a5a" transform="rotate(-30 337.2 628.4)" dy=".35em" letter-spacing="-.35">Via Pasquale Paoli</text><text x="623.3" y="518.5" font-size="10" fill="#5a5a5a" transform="rotate(-21 623.3 518.5)" dy=".35em" letter-spacing="-.35">Via Oltrecolle</text><text x="518.0" y="586.5" font-size="10" fill="#5a5a5a" transform="rotate(-28 518.0 586.5)" dy=".35em" letter-spacing="-.35">Via Oltrecolle</text><text x="140.0" y="133.0" font-size="10" fill="#5a5a5a" transform="rotate(35 140.0 133.0)" dy=".35em" letter-spacing="-.35">Via Valeria</text><text x="222.0" y="110.0" font-size="10" fill="#5a5a5a" transform="rotate(-57 222.0 110.0)" dy=".35em" letter-spacing="-.35">Via per Cernobbio</text><text x="373.0" y="142.0" font-size="10" fill="#5a5a5a" transform="rotate(55 373.0 142.0)" dy=".35em" letter-spacing="-.35">Viale Geno</text><text x="403.0" y="163.0" font-size="10" fill="#5a5a5a" transform="rotate(55 403.0 163.0)" dy=".35em" letter-spacing="-.35">Via Torno</text><text x="534.0" y="143.0" font-size="14" fill="#818181" letter-spacing="-.3">Brunate</text><text x="25.0" y="298.0" font-size="14" fill="#818181" letter-spacing="-.3">San Fermo</text><text x="22.0" y="315.0" font-size="14" fill="#818181" letter-spacing="-.3">della Battaglia</text><text x="84.0" y="644.0" font-size="11.5" fill="#818181" letter-spacing=".7" stroke="#818181" stroke-width=".25">Lazzago</text><text x="752.0" y="373.0" font-size="11.5" fill="#818181" letter-spacing=".7" stroke="#818181" stroke-width=".25">Camnago Volta</text><text x="783.0" y="543.0" font-size="14.5" fill="#818181" letter-spacing="-.3">Lipomo</text><text x="225.0" y="679.0" font-size="10" fill="#5a5a5a" dy=".35em" letter-spacing="-.35">Via Cecilio</text><text x="413.0" y="686.0" font-size="10" fill="#5a5a5a" transform="rotate(-76 413.0 686.0)" dy=".35em" letter-spacing="-.35">Via Belvedere</text><text x="457.0" y="686.0" font-size="10" fill="#5a5a5a" transform="rotate(52 457.0 686.0)" dy=".35em" letter-spacing="-.35">Via Canturina</text><text x="457.0" y="364.0" font-size="10" fill="#5a5a5a" transform="rotate(75 457.0 364.0)" dy=".35em" letter-spacing="-.35">Via Mentana</text><text x="429.0" y="374.0" font-size="10" fill="#5a5a5a" transform="rotate(79 429.0 374.0)" dy=".35em" letter-spacing="-.35">Via Milano</text><text x="507.5" y="390.0" font-size="10" fill="#5a5a5a" transform="rotate(-30 507.5 390.0)" dy=".35em" letter-spacing="-.35">Via Castelnuovo</text><text x="469.0" y="484.0" font-size="10" fill="#5a5a5a" transform="rotate(41 469.0 484.0)" dy=".35em" letter-spacing="-.35">Via Napoleona</text><text x="219.0" y="230.0" font-size="10" fill="#5a5a5a" transform="rotate(42 219.0 230.0)" dy=".35em" letter-spacing="-.35">Via Nino Bixio</text><text x="232.0" y="212.0" font-size="10" fill="#5a5a5a" transform="rotate(42 232.0 212.0)" dy=".35em" letter-spacing="-.35">Via Borgovico</text><text x="105.5" y="349.0" font-size="10" fill="#5a5a5a" transform="rotate(-63 105.5 349.0)" dy=".35em" letter-spacing="-.35">Via San Fermo</text></g></g><rect x="97.500" y="206.500" width="620" height="437" fill="none" stroke="#fff" stroke-opacity=".8"/></g>
<g id="rulers"><path d="M102.3 201v5M108.2 201v5M114.1 201v5M120.0 201v5M131.8 201v5M137.7 201v5M143.6 201v5M149.5 201v5M161.3 201v5M167.2 201v5M173.1 201v5M179.0 201v5M190.8 201v5M196.7 201v5M202.6 201v5M208.5 201v5M220.3 201v5M226.2 201v5M232.1 201v5M238.0 201v5M249.9 201v5M255.8 201v5M261.7 201v5M267.6 201v5M279.4 201v5M285.3 201v5M291.2 201v5M297.1 201v5M308.9 201v5M314.8 201v5M320.7 201v5M326.6 201v5M338.4 201v5M344.3 201v5M350.2 201v5M356.1 201v5M367.9 201v5M373.8 201v5M379.7 201v5M385.6 201v5M397.4 201v5M403.3 201v5M409.2 201v5M415.1 201v5M426.9 201v5M432.8 201v5M438.7 201v5M444.6 201v5M456.4 201v5M462.3 201v5M468.2 201v5M474.1 201v5M485.9 201v5M491.8 201v5M497.7 201v5M503.6 201v5M515.4 201v5M521.3 201v5M527.2 201v5M533.1 201v5M545.0 201v5M550.9 201v5M556.8 201v5M562.7 201v5M574.5 201v5M580.4 201v5M586.3 201v5M592.2 201v5M604.0 201v5M609.9 201v5M615.8 201v5M621.7 201v5M633.5 201v5M639.4 201v5M645.3 201v5M651.2 201v5M663.0 201v5M668.9 201v5M674.8 201v5M680.7 201v5M692.5 201v5M698.4 201v5M704.3 201v5M710.2 201v5M125.9 186v20M155.4 186v20M184.9 186v20M214.4 186v20M244.0 186v20M273.5 186v20M303.0 186v20M332.5 186v20M362.0 186v20M391.5 186v20M421.0 186v20M450.5 186v20M480.0 186v20M509.5 186v20M539.1 186v20M568.6 186v20M598.1 186v20M627.6 186v20M657.1 186v20M686.6 186v20M716.1 186v20" stroke="#b4b4b4" stroke-width="2" fill="none"/>
<path d="M92 210.9h5M92 216.8h5M92 222.7h5M92 228.6h5M92 240.4h5M92 246.3h5M92 252.2h5M92 258.1h5M92 269.9h5M92 275.8h5M92 281.7h5M92 287.6h5M92 299.4h5M92 305.3h5M92 311.2h5M92 317.1h5M92 328.9h5M92 334.8h5M92 340.7h5M92 346.6h5M92 358.5h5M92 364.4h5M92 370.3h5M92 376.2h5M92 388.0h5M92 393.9h5M92 399.8h5M92 405.7h5M92 417.5h5M92 423.4h5M92 429.3h5M92 435.2h5M92 447.0h5M92 452.9h5M92 458.8h5M92 464.7h5M92 476.5h5M92 482.4h5M92 488.3h5M92 494.2h5M92 506.0h5M92 511.9h5M92 517.8h5M92 523.7h5M92 535.5h5M92 541.4h5M92 547.3h5M92 553.2h5M92 565.0h5M92 570.9h5M92 576.8h5M92 582.7h5M92 594.5h5M92 600.4h5M92 606.3h5M92 612.2h5M92 624.0h5M92 629.9h5M92 635.8h5M92 641.7h5M77 234.5h20M77 264.0h20M77 293.5h20M77 323.0h20M77 352.6h20M77 382.1h20M77 411.6h20M77 441.1h20M77 470.6h20M77 500.1h20M77 529.6h20M77 559.1h20M77 588.6h20M77 618.1h20" stroke="#ececec" stroke-width="1.500" fill="none"/>
<g font-family="Liberation Sans, sans-serif" font-size="12.500" fill="#e2e2e2">
<text x="77" y="200" font-size="12.500" textLength="15" lengthAdjust="spacingAndGlyphs">cm</text>
<text transform="translate(123.7 195.500) scale(.74 1)" text-anchor="end">1</text>
<text transform="translate(153.2 195.500) scale(.74 1)" text-anchor="end">2</text>
<text transform="translate(182.7 195.500) scale(.74 1)" text-anchor="end">3</text>
<text transform="translate(212.2 195.500) scale(.74 1)" text-anchor="end">4</text>
<text transform="translate(241.8 195.500) scale(.74 1)" text-anchor="end">5</text>
<text transform="translate(271.3 195.500) scale(.74 1)" text-anchor="end">6</text>
<text transform="translate(300.8 195.500) scale(.74 1)" text-anchor="end">7</text>
<text transform="translate(330.3 195.500) scale(.74 1)" text-anchor="end">8</text>
<text transform="translate(359.8 195.500) scale(.74 1)" text-anchor="end">9</text>
<text transform="translate(389.3 195.500) scale(.74 1)" text-anchor="end">10</text>
<text transform="translate(418.8 195.500) scale(.74 1)" text-anchor="end">11</text>
<text transform="translate(448.3 195.500) scale(.74 1)" text-anchor="end">12</text>
<text transform="translate(477.8 195.500) scale(.74 1)" text-anchor="end">13</text>
<text transform="translate(507.3 195.500) scale(.74 1)" text-anchor="end">14</text>
<text transform="translate(536.9 195.500) scale(.74 1)" text-anchor="end">15</text>
<text transform="translate(566.4 195.500) scale(.74 1)" text-anchor="end">16</text>
<text transform="translate(595.9 195.500) scale(.74 1)" text-anchor="end">17</text>
<text transform="translate(625.4 195.500) scale(.74 1)" text-anchor="end">18</text>
<text transform="translate(654.9 195.500) scale(.74 1)" text-anchor="end">19</text>
<text transform="translate(684.4 195.500) scale(.74 1)" text-anchor="end">20</text>
<text transform="translate(713.9 195.500) scale(.74 1)" text-anchor="end">21</text>
<text transform="translate(84 230.9) scale(.78 1)" text-anchor="middle" font-size="13">1</text>
<text transform="translate(84 260.4) scale(.78 1)" text-anchor="middle" font-size="13">2</text>
<text transform="translate(84 289.9) scale(.78 1)" text-anchor="middle" font-size="13">3</text>
<text transform="translate(84 319.4) scale(.78 1)" text-anchor="middle" font-size="13">4</text>
<text transform="translate(84 348.9) scale(.78 1)" text-anchor="middle" font-size="13">5</text>
<text transform="translate(84 378.5) scale(.78 1)" text-anchor="middle" font-size="13">6</text>
<text transform="translate(84 408.0) scale(.78 1)" text-anchor="middle" font-size="13">7</text>
<text transform="translate(84 437.5) scale(.78 1)" text-anchor="middle" font-size="13">8</text>
<text transform="translate(84 467.0) scale(.78 1)" text-anchor="middle" font-size="13">9</text>
<text transform="translate(84 496.5) scale(.78 1)" text-anchor="middle" font-size="13">10</text>
<text transform="translate(84 526.0) scale(.78 1)" text-anchor="middle" font-size="13">11</text>
<text transform="translate(84 555.5) scale(.78 1)" text-anchor="middle" font-size="13">12</text>
<text transform="translate(84 585.0) scale(.78 1)" text-anchor="middle" font-size="13">13</text>
<text transform="translate(84 614.5) scale(.78 1)" text-anchor="middle" font-size="13">14</text>
</g></g>
<path d="M407.500 389v29M407.500 435v26M372 426h27M416 426h28" stroke="#4a4a4a" stroke-width="2" fill="none"/>
</svg>
</div>


<div id="ov">
<div class="abs" style="left:34px;top:92px;font-size:14px;color:#bdbdbd;letter-spacing:-.55px;white-space:nowrap">Scale map detail</div>
<svg class="abs" style="left:146px;top:88px" width="200" height="24" viewBox="0 0 200 24">
<g fill="none" stroke="#8f8f8f" stroke-width="1.600"><path d="M3 8.500v-3h4M19 5.500h4v3M23 15.500v3h-4M7 18.500h-4v-3"/><rect x="8.500" y="9.500" width="9" height="5"/>
<path d="M128 8v-5h5M143 3h5v5M148 16v5h-5M133 21h-5v-5"/><rect x="132" y="7.500" width="12" height="9" stroke-width="2"/></g>
<rect x="33" y="11" width="85" height="2.400" rx="1.200" fill="#6f7479"/>
<circle cx="98" cy="12.200" r="6" fill="#2aa9f5"/>
</svg>
<div class="abs" style="left:314px;top:92px;font-size:14px;color:#c8c8c8;letter-spacing:-.5px">90%</div>
<div id="tb" class="abs" style="left:475px;top:75px;width:188px;height:50px;background:#fff;border-radius:3px;font-size:9.600px;line-height:8.800px;color:#222;text-align:center">
<div class="abs" style="left:47px;top:3px;width:1px;height:44px;background:#e6e6e6"></div><div class="abs" style="left:94px;top:3px;width:1px;height:44px;background:#e6e6e6"></div><div class="abs" style="left:141px;top:3px;width:1px;height:44px;background:#e6e6e6"></div>
<div class="abs" style="left:0;top:30px;width:47px">Draw<br>route</div>
<div class="abs" style="left:47px;top:30px;width:47px">Upload<br>file</div>
<div class="abs" style="left:90px;top:34px;width:55px;font-size:9.600px">Add POIs</div>
<div class="abs" style="left:141px;top:30px;width:47px">Add<br>shape</div>
<svg class="abs" style="left:0;top:0" width="188" height="50" viewBox="0 0 188 50">
<g fill="none" stroke="#2b2b36" stroke-width="1.800"><circle cx="15.500" cy="19.500" r="2.600"/><circle cx="32.500" cy="9.500" r="2.600"/><path d="M18 19.800c5 .8 7.500-1.500 8.500-5s2-5 4-5.300"/></g>
<path d="M28.500 24.500l1-3.200 5-5 2.200 2.200-5 5z" fill="#2b2b36"/>
<path d="M59.500 4.500h12l5 5v15.500h-17z" fill="#2b2b36"/><path d="M71.500 4.500v5h5z" fill="#fff" opacity=".85"/>
<text x="68" y="16.500" font-size="8.500" font-weight="bold" fill="#fff" text-anchor="middle" font-family="Liberation Sans, sans-serif" letter-spacing="-.2">GPX</text>
<circle cx="78" cy="22" r="5.500" fill="#fff"/><path d="M78 26.500v-8M74.500 21.500l3.500-3.500 3.500 3.500" fill="none" stroke="#2b2b36" stroke-width="1.600"/>
<path d="M114.500 4.500c-4.600 0-8 3.500-8 7.800 0 5.500 8 15 8 15s8-9.500 8-15c0-4.300-3.400-7.800-8-7.800zm0 4.200a3.400 3.400 0 1 1 0 6.800 3.400 3.400 0 0 1 0-6.800z" fill="#2b2b36" fill-rule="evenodd"/>
<path d="M121 23h9M125.500 18.500v9" stroke="#2b2b36" stroke-width="2"/>
<path d="M160 5.500h8v5.500l3 .8v5l.7 2.200-3 2-1.500 2 .3 2-2.500-.8-1.500-3.500-2-2-1.800.2-1.200 1.500-2.500-2-.8-2.200-2.700-2.400 7.500.2z" fill="#2b2b36"/>
<path d="M167.500 22h9M172 17.500v9" stroke="#2b2b36" stroke-width="2"/>
</svg>
</div>
<div class="abs" style="left:2px;top:57px;width:811px;height:6px;background:linear-gradient(rgba(0,0,0,.35),rgba(0,0,0,0))"></div>
<div class="abs" style="left:20px;top:644px;width:35px;height:70px;background:#fff;border-radius:3px;box-shadow:0 1px 3px rgba(0,0,0,.4)"><div class="abs" style="left:0;top:34px;width:35px;height:1px;background:#ccc"></div><div class="abs" style="left:0;top:0;width:35px;height:34px;line-height:34px;text-align:center;font-weight:bold;font-size:21px;color:#000">+</div><div class="abs" style="left:0;top:35px;width:35px;height:35px;line-height:32px;text-align:center;font-weight:bold;font-size:21px;color:#000">-</div></div>
</div>
<div id="panel"></div>
<div id="pc">
<div class="num" style="left:843px;top:65px">1</div>
<div class="h" style="left:891px;top:73px">Choose print size:</div>
<div class="inp" style="left:843px;top:121px;width:97px;padding-left:15px;letter-spacing:-.5px">A5<span class="abs" style="right:4px;top:0;font-size:10px;font-weight:normal;color:#444">&#9660;</span></div>
<div class="lbl" style="left:844px;top:169px">Width:</div>
<div class="lbl" style="left:956px;top:169px">Height:</div>
<div class="inp" style="left:843px;top:185px;width:69px;padding-left:11px;letter-spacing:-.6px">210</div>
<svg class="abs" style="left:925px;top:194px" width="18" height="17" viewBox="0 0 18 17"><path d="M2 3.200h9.500v-2.200l5.500 3.600-5.500 3.600v-2.200h-9.500zM16 10.200h-9.500v-2.200l-5.500 3.600 5.500 3.600v-2.200h9.500z" fill="#2ba7f3"/></svg>
<div class="inp" style="left:956px;top:185px;width:68px;padding-left:11px;letter-spacing:-.6px">148</div>
<div class="lbl" style="left:1039px;top:194px;color:#666">mm</div>
<div class="abs" style="left:1096px;top:185px;width:69px;height:35px;border-radius:3px;background:linear-gradient(#a3a3a3,#858585);color:#fff;font-weight:bold;font-size:13px;text-align:center;line-height:34px">Apply</div>
<div class="abs" style="left:853px;top:228px;width:305px;height:1px;background:#ddd"></div>
<div class="num" style="left:843px;top:237px">2</div>
<div class="h" style="left:891px;top:245px">Choose location:</div>
<div class="inp" style="left:843px;top:293px;width:322px;font-weight:normal;font-size:18px;color:#444;padding-left:36px;letter-spacing:-.25px">Como, Italy</div>
<svg class="abs" style="left:852px;top:302px" width="18" height="18" viewBox="0 0 18 18"><circle cx="7" cy="7" r="4.6" fill="none" stroke="#888" stroke-width="1.8"/><path d="M10.500 10.500L15.500 15.500" stroke="#888" stroke-width="2.2" stroke-linecap="round"/></svg>
<svg class="abs" style="left:1135px;top:299px" width="24" height="24" viewBox="0 0 24 24"><circle cx="12" cy="12" r="7.500" fill="none" stroke="#777" stroke-width="1.6"/><circle cx="12" cy="12" r="3.800" fill="#777"/><path d="M12 1v4M12 19v4M1 12h4M19 12h4" stroke="#777" stroke-width="1.6"/></svg>
<div class="abs" style="left:850px;top:336px;width:300px;font-size:11px;line-height:12px;color:#444;letter-spacing:-.05px">Plus: Zoom, move and scale the map on the left to fine-tune your frame.</div>

<div class="abs" style="left:835px;top:384px;width:338px;height:36px;border-radius:4px 4px 0 0;background:linear-gradient(#e9e9e9,#d6d6d6)"></div>
<div class="abs" style="left:835px;top:419px;width:12px;height:10px;border-radius:5px 0 0 5px;background:#ababab"></div><div class="abs" style="left:1161px;top:419px;width:12px;height:10px;border-radius:0 5px 5px 0;background:#ababab"></div>
<div class="abs" style="left:845px;top:420px;width:318px;height:79px;background:#fafafa;border:1px solid #d8d8d8;border-top:0;border-radius:0 0 3px 3px;box-shadow:0 1px 1px rgba(0,0,0,.08)"></div>
<div class="abs" style="left:864px;top:397px;font-size:12.500px;color:#444;letter-spacing:-.15px">You will receive:</div>
<div class="abs" style="left:921px;top:437px;font-size:14px;line-height:14px;color:#444;letter-spacing:-.4px">High-<br>quality<br>PNG file</div>
<div class="abs" style="left:1079px;top:437px;font-size:14px;line-height:14px;color:#444;letter-spacing:-.4px">Layered<br>Photoshop<br>file</div>
<svg class="abs" style="left:861px;top:435px" width="44" height="44" viewBox="0 0 44 44"><path d="M11 1.500h24l6.500 6.500v33.500h-30.500z" fill="#f6f6f6" stroke="#d4d4d4"/><path d="M35 1.500v6.500h6.500z" fill="#e0e0e0"/><rect x="15.500" y="11.500" width="22" height="22" fill="#0f7be0"/><path d="M17.500 13.500h18v14l-3.500-6.500-2.500 3.500-5.500-8-6.500 10z" fill="#fff"/><rect x="1" y="2" width="31" height="11" fill="#1f8fe8"/><text x="16.500" y="11" font-size="9.500" font-weight="bold" fill="#fff" text-anchor="middle" font-family="Liberation Sans, sans-serif" letter-spacing="-.3">PNG</text></svg>
<svg class="abs" style="left:1019px;top:435px" width="44" height="44" viewBox="0 0 44 44"><path d="M10 1h23l8.500 8.500v32.500h-31.500z" fill="#1b1443"/><path d="M33 1v8.500h8.500z" fill="#27c3fa"/><text x="25.500" y="35.500" font-size="23" fill="#27c3fa" stroke="#27c3fa" stroke-width=".5" text-anchor="middle" font-family="Liberation Sans, sans-serif" textLength="20" lengthAdjust="spacingAndGlyphs">Ps</text><rect x="1" y="2" width="29" height="11" fill="#27c3fa"/><text x="15.500" y="11" font-size="9.500" font-weight="bold" fill="#1b1443" text-anchor="middle" font-family="Liberation Sans, sans-serif" letter-spacing="-.3">PSD</text></svg>
<div class="abs" style="left:843px;top:510px;width:322px;height:50px;border-radius:3px;background:linear-gradient(#4fc1ff,#0a9ef3);color:#fff;font-weight:bold;font-size:16px;line-height:52px;padding-left:57px;letter-spacing:-.3px;box-shadow:0 1px 1px rgba(0,0,0,.2)">Next: Design your map</div>
<svg class="abs" style="left:1132px;top:527px" width="12" height="16" viewBox="0 0 12 16"><path d="M1 0l10 8-10 8z" fill="#fff"/></svg>
</div>
</body>
</html>
